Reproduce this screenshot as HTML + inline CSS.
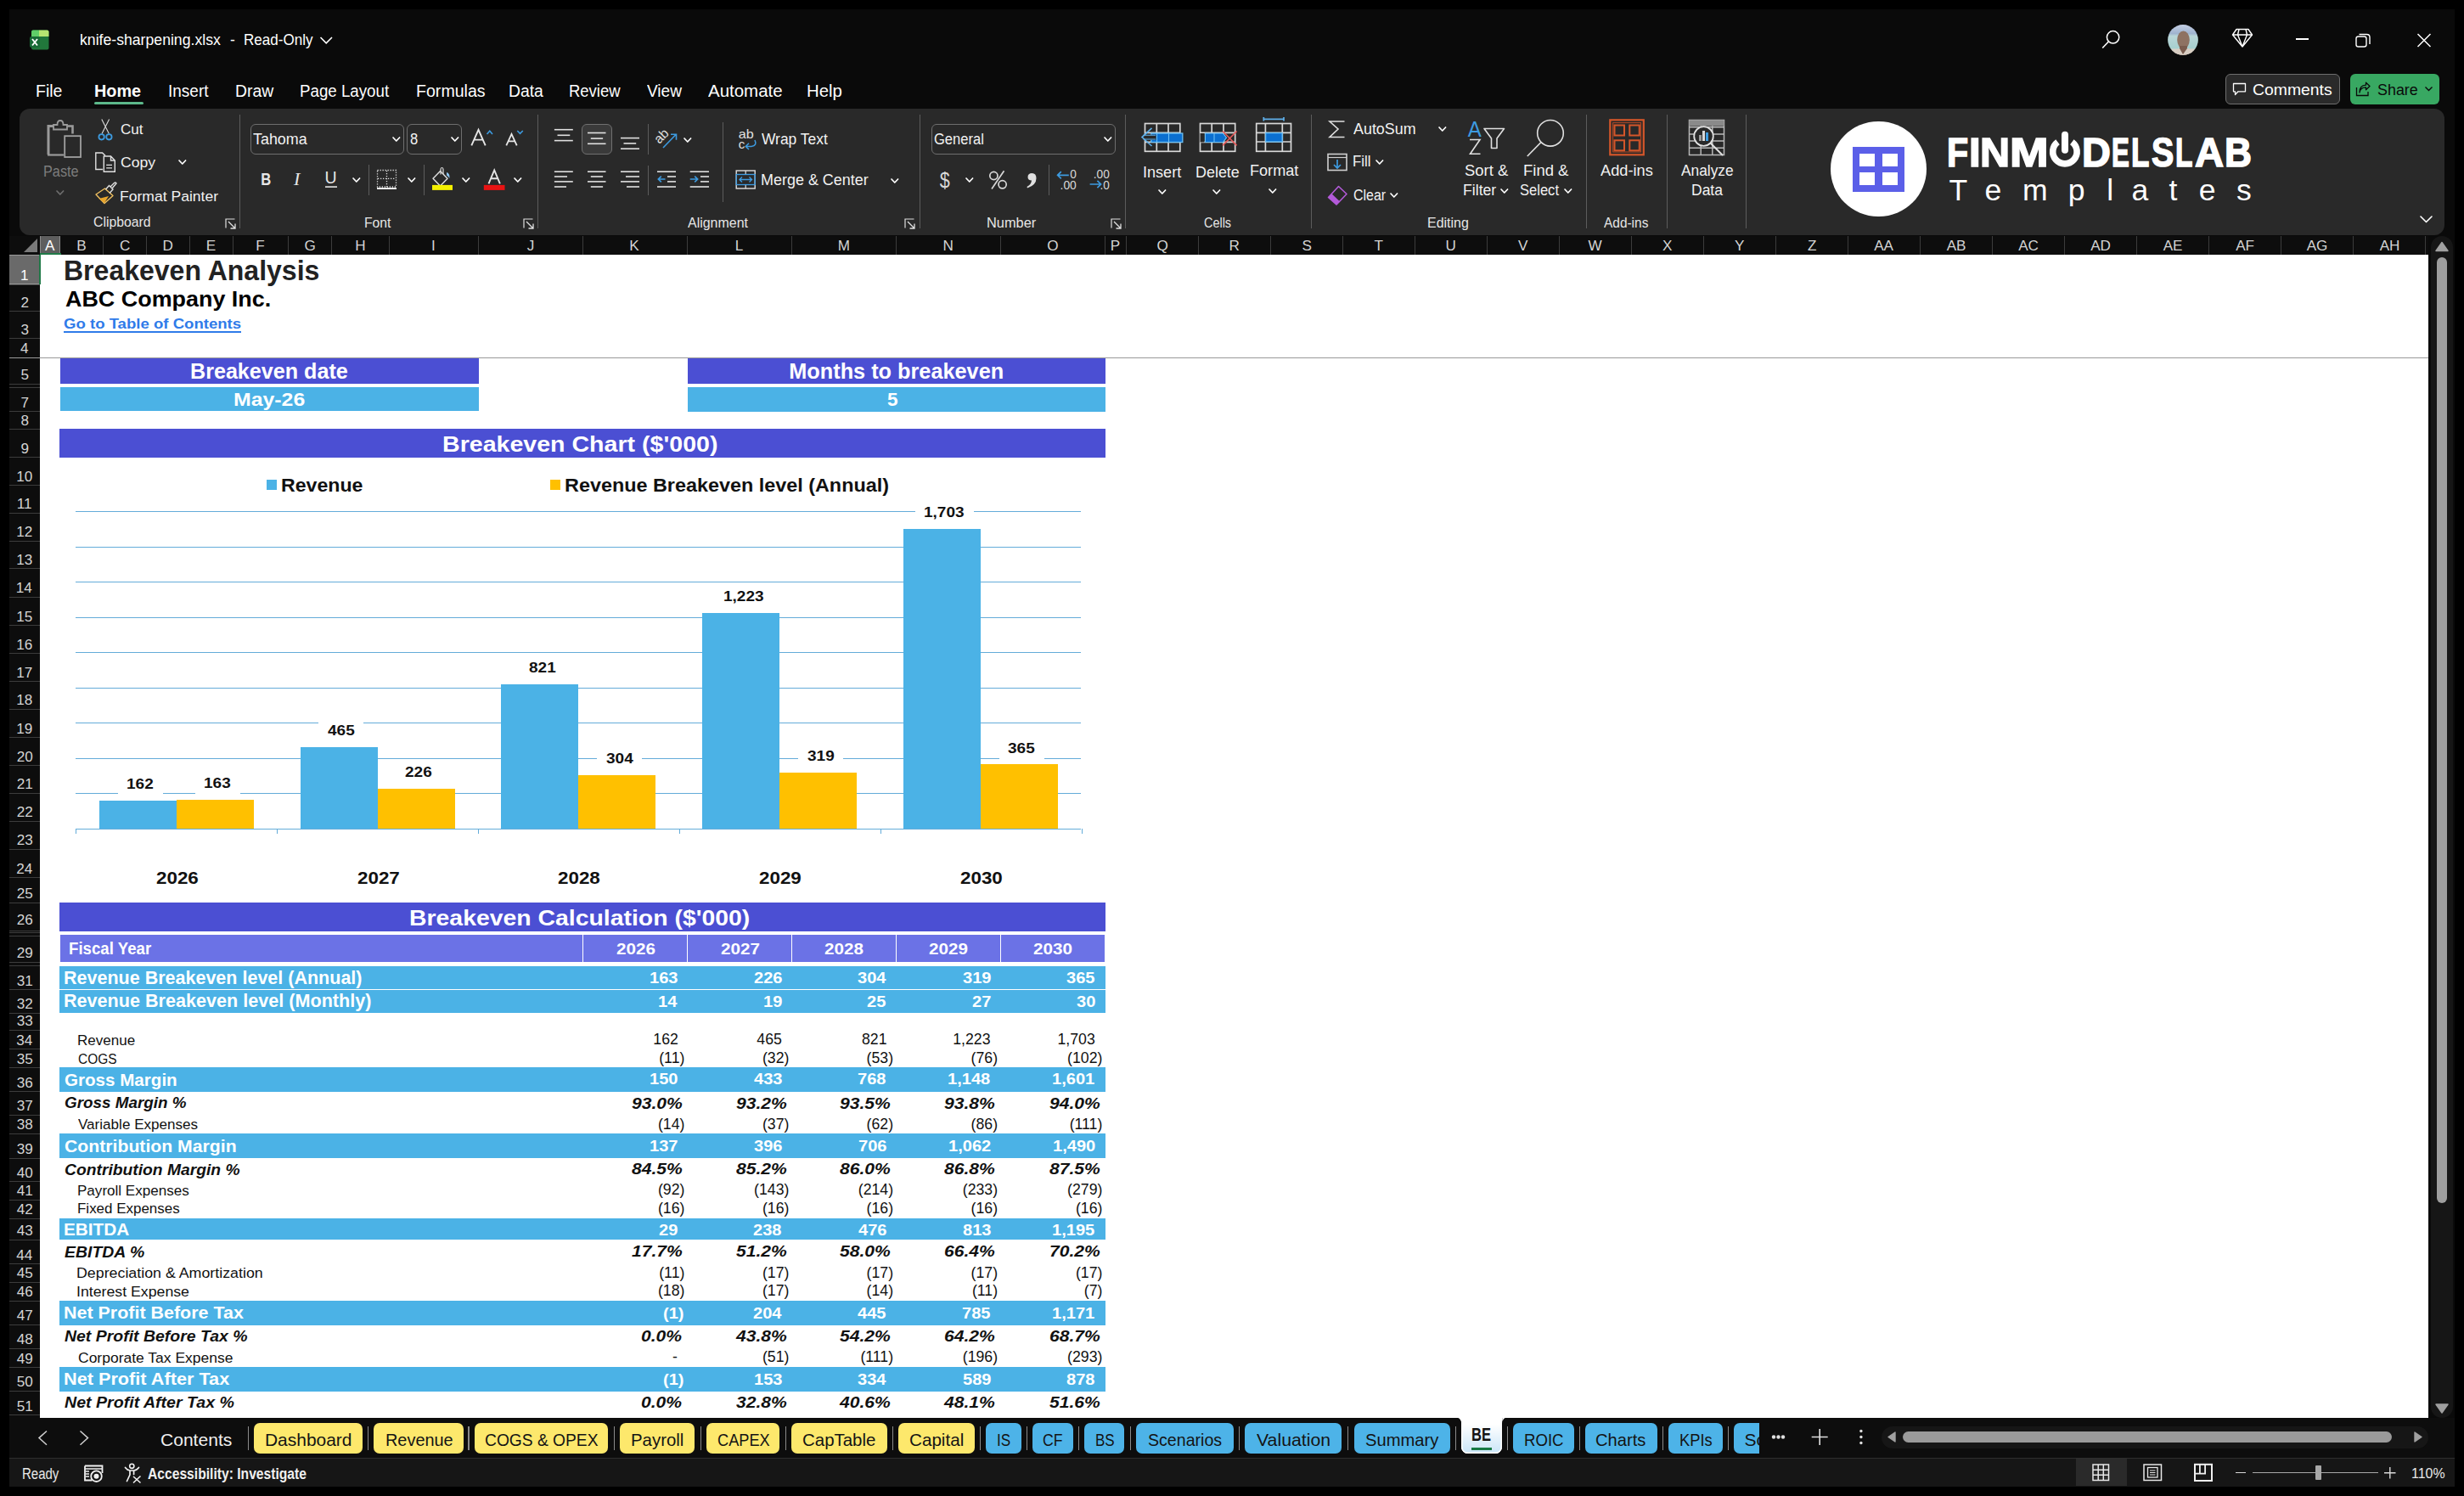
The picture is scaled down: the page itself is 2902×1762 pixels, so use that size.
<!DOCTYPE html>
<html><head><meta charset="utf-8"><style>
html,body{margin:0;padding:0;}
body{width:2902px;height:1762px;background:#000;position:relative;overflow:hidden;font-family:'Liberation Sans', sans-serif;}
.t{position:absolute;white-space:nowrap;line-height:1;transform-origin:0 0;}
svg{position:absolute;overflow:visible;}
</style></head><body>
<div style="position:absolute;left:11.00px;top:11.00px;width:2880.00px;height:1740.00px;background:#0a0a0a;"></div><div style="position:absolute;left:23.00px;top:128.00px;width:2856.00px;height:149.00px;background:#292929;border-radius:12px;"></div><div style="position:absolute;left:11.00px;top:278.00px;width:2849.00px;height:22.00px;background:#0d0d0d;"></div><div style="position:absolute;left:11.00px;top:300.00px;width:36.00px;height:1370.00px;background:#0d0d0d;"></div><div style="position:absolute;left:47.00px;top:278.00px;width:24.00px;height:22.00px;background:#5e5e5e;"></div><div style="position:absolute;left:47.00px;top:298.20px;width:25.00px;height:2.10px;background:#217a48;"></div><div style="position:absolute;left:47.00px;top:278.00px;width:1.00px;height:20.00px;background:#8a8a8a;"></div><div style="position:absolute;left:70.00px;top:278.00px;width:1.00px;height:20.00px;background:#8a8a8a;"></div><div style="position:absolute;left:121.10px;top:278.00px;width:1.00px;height:22.00px;background:#3c3c3c;"></div><div style="position:absolute;left:171.90px;top:278.00px;width:1.00px;height:22.00px;background:#3c3c3c;"></div><div style="position:absolute;left:223.10px;top:278.00px;width:1.00px;height:22.00px;background:#3c3c3c;"></div><div style="position:absolute;left:273.60px;top:278.00px;width:1.00px;height:22.00px;background:#3c3c3c;"></div><div style="position:absolute;left:339.00px;top:278.00px;width:1.00px;height:22.00px;background:#3c3c3c;"></div><div style="position:absolute;left:390.10px;top:278.00px;width:1.00px;height:22.00px;background:#3c3c3c;"></div><div style="position:absolute;left:457.50px;top:278.00px;width:1.00px;height:22.00px;background:#3c3c3c;"></div><div style="position:absolute;left:562.50px;top:278.00px;width:1.00px;height:22.00px;background:#3c3c3c;"></div><div style="position:absolute;left:685.80px;top:278.00px;width:1.00px;height:22.00px;background:#3c3c3c;"></div><div style="position:absolute;left:808.80px;top:278.00px;width:1.00px;height:22.00px;background:#3c3c3c;"></div><div style="position:absolute;left:931.80px;top:278.00px;width:1.00px;height:22.00px;background:#3c3c3c;"></div><div style="position:absolute;left:1054.50px;top:278.00px;width:1.00px;height:22.00px;background:#3c3c3c;"></div><div style="position:absolute;left:1177.50px;top:278.00px;width:1.00px;height:22.00px;background:#3c3c3c;"></div><div style="position:absolute;left:1300.80px;top:278.00px;width:1.00px;height:22.00px;background:#3c3c3c;"></div><div style="position:absolute;left:1325.90px;top:278.00px;width:1.00px;height:22.00px;background:#3c3c3c;"></div><div style="position:absolute;left:1410.90px;top:278.00px;width:1.00px;height:22.00px;background:#3c3c3c;"></div><div style="position:absolute;left:1495.90px;top:278.00px;width:1.00px;height:22.00px;background:#3c3c3c;"></div><div style="position:absolute;left:1580.90px;top:278.00px;width:1.00px;height:22.00px;background:#3c3c3c;"></div><div style="position:absolute;left:1665.90px;top:278.00px;width:1.00px;height:22.00px;background:#3c3c3c;"></div><div style="position:absolute;left:1750.90px;top:278.00px;width:1.00px;height:22.00px;background:#3c3c3c;"></div><div style="position:absolute;left:1835.90px;top:278.00px;width:1.00px;height:22.00px;background:#3c3c3c;"></div><div style="position:absolute;left:1920.90px;top:278.00px;width:1.00px;height:22.00px;background:#3c3c3c;"></div><div style="position:absolute;left:2005.90px;top:278.00px;width:1.00px;height:22.00px;background:#3c3c3c;"></div><div style="position:absolute;left:2090.90px;top:278.00px;width:1.00px;height:22.00px;background:#3c3c3c;"></div><div style="position:absolute;left:2175.90px;top:278.00px;width:1.00px;height:22.00px;background:#3c3c3c;"></div><div style="position:absolute;left:2260.90px;top:278.00px;width:1.00px;height:22.00px;background:#3c3c3c;"></div><div style="position:absolute;left:2345.90px;top:278.00px;width:1.00px;height:22.00px;background:#3c3c3c;"></div><div style="position:absolute;left:2430.90px;top:278.00px;width:1.00px;height:22.00px;background:#3c3c3c;"></div><div style="position:absolute;left:2515.90px;top:278.00px;width:1.00px;height:22.00px;background:#3c3c3c;"></div><div style="position:absolute;left:2600.90px;top:278.00px;width:1.00px;height:22.00px;background:#3c3c3c;"></div><div style="position:absolute;left:2685.90px;top:278.00px;width:1.00px;height:22.00px;background:#3c3c3c;"></div><div style="position:absolute;left:2770.90px;top:278.00px;width:1.00px;height:22.00px;background:#3c3c3c;"></div><div style="position:absolute;left:2855.90px;top:278.00px;width:1.00px;height:22.00px;background:#3c3c3c;"></div><svg style="left:11px;top:278px" width="36" height="22"><polygon points="33,3 33,19 17,19" fill="#7a7a7a"/></svg><div style="position:absolute;left:47.00px;top:300.00px;width:2813.00px;height:1370.00px;background:#ffffff;"></div><div style="position:absolute;left:11.00px;top:300.30px;width:36.00px;height:34.80px;background:#6a6a6a;"></div><div style="position:absolute;left:46.00px;top:300.00px;width:2.00px;height:35.10px;background:#217a48;"></div><div style="position:absolute;left:11.00px;top:300.30px;width:35.00px;height:1.00px;background:#9a9a9a;"></div><div style="position:absolute;left:11.00px;top:334.10px;width:35.00px;height:1.00px;background:#9a9a9a;"></div><div style="position:absolute;left:11.00px;top:334.60px;width:36.00px;height:1.10px;background:#3c3c3c;"></div><div style="position:absolute;left:11.00px;top:366.20px;width:36.00px;height:1.10px;background:#3c3c3c;"></div><div style="position:absolute;left:11.00px;top:398.20px;width:36.00px;height:1.10px;background:#3c3c3c;"></div><div style="position:absolute;left:11.00px;top:420.90px;width:36.00px;height:1.10px;background:#3c3c3c;"></div><div style="position:absolute;left:11.00px;top:451.90px;width:36.00px;height:1.10px;background:#3c3c3c;"></div><div style="position:absolute;left:11.00px;top:455.60px;width:36.00px;height:1.10px;background:#3c3c3c;"></div><div style="position:absolute;left:11.00px;top:484.00px;width:36.00px;height:1.10px;background:#3c3c3c;"></div><div style="position:absolute;left:11.00px;top:505.10px;width:36.00px;height:1.10px;background:#3c3c3c;"></div><div style="position:absolute;left:11.00px;top:538.00px;width:36.00px;height:1.10px;background:#3c3c3c;"></div><div style="position:absolute;left:11.00px;top:571.20px;width:36.00px;height:1.10px;background:#3c3c3c;"></div><div style="position:absolute;left:11.00px;top:603.90px;width:36.00px;height:1.10px;background:#3c3c3c;"></div><div style="position:absolute;left:11.00px;top:636.90px;width:36.00px;height:1.10px;background:#3c3c3c;"></div><div style="position:absolute;left:11.00px;top:669.40px;width:36.00px;height:1.10px;background:#3c3c3c;"></div><div style="position:absolute;left:11.00px;top:702.80px;width:36.00px;height:1.10px;background:#3c3c3c;"></div><div style="position:absolute;left:11.00px;top:736.00px;width:36.00px;height:1.10px;background:#3c3c3c;"></div><div style="position:absolute;left:11.00px;top:769.00px;width:36.00px;height:1.10px;background:#3c3c3c;"></div><div style="position:absolute;left:11.00px;top:802.00px;width:36.00px;height:1.10px;background:#3c3c3c;"></div><div style="position:absolute;left:11.00px;top:834.50px;width:36.00px;height:1.10px;background:#3c3c3c;"></div><div style="position:absolute;left:11.00px;top:868.10px;width:36.00px;height:1.10px;background:#3c3c3c;"></div><div style="position:absolute;left:11.00px;top:901.10px;width:36.00px;height:1.10px;background:#3c3c3c;"></div><div style="position:absolute;left:11.00px;top:933.80px;width:36.00px;height:1.10px;background:#3c3c3c;"></div><div style="position:absolute;left:11.00px;top:966.80px;width:36.00px;height:1.10px;background:#3c3c3c;"></div><div style="position:absolute;left:11.00px;top:999.70px;width:36.00px;height:1.10px;background:#3c3c3c;"></div><div style="position:absolute;left:11.00px;top:1033.40px;width:36.00px;height:1.10px;background:#3c3c3c;"></div><div style="position:absolute;left:11.00px;top:1062.90px;width:36.00px;height:1.10px;background:#3c3c3c;"></div><div style="position:absolute;left:11.00px;top:1096.10px;width:36.00px;height:1.10px;background:#3c3c3c;"></div><div style="position:absolute;left:11.00px;top:1098.00px;width:36.00px;height:1.10px;background:#3c3c3c;"></div><div style="position:absolute;left:11.00px;top:1101.90px;width:36.00px;height:1.10px;background:#3c3c3c;"></div><div style="position:absolute;left:11.00px;top:1132.90px;width:36.00px;height:1.10px;background:#3c3c3c;"></div><div style="position:absolute;left:11.00px;top:1136.80px;width:36.00px;height:1.10px;background:#3c3c3c;"></div><div style="position:absolute;left:11.00px;top:1165.00px;width:36.00px;height:1.10px;background:#3c3c3c;"></div><div style="position:absolute;left:11.00px;top:1192.90px;width:36.00px;height:1.10px;background:#3c3c3c;"></div><div style="position:absolute;left:11.00px;top:1212.60px;width:36.00px;height:1.10px;background:#3c3c3c;"></div><div style="position:absolute;left:11.00px;top:1235.40px;width:36.00px;height:1.10px;background:#3c3c3c;"></div><div style="position:absolute;left:11.00px;top:1257.00px;width:36.00px;height:1.10px;background:#3c3c3c;"></div><div style="position:absolute;left:11.00px;top:1285.00px;width:36.00px;height:1.10px;background:#3c3c3c;"></div><div style="position:absolute;left:11.00px;top:1312.70px;width:36.00px;height:1.10px;background:#3c3c3c;"></div><div style="position:absolute;left:11.00px;top:1334.70px;width:36.00px;height:1.10px;background:#3c3c3c;"></div><div style="position:absolute;left:11.00px;top:1363.50px;width:36.00px;height:1.10px;background:#3c3c3c;"></div><div style="position:absolute;left:11.00px;top:1391.00px;width:36.00px;height:1.10px;background:#3c3c3c;"></div><div style="position:absolute;left:11.00px;top:1412.90px;width:36.00px;height:1.10px;background:#3c3c3c;"></div><div style="position:absolute;left:11.00px;top:1434.80px;width:36.00px;height:1.10px;background:#3c3c3c;"></div><div style="position:absolute;left:11.00px;top:1459.80px;width:36.00px;height:1.10px;background:#3c3c3c;"></div><div style="position:absolute;left:11.00px;top:1488.00px;width:36.00px;height:1.10px;background:#3c3c3c;"></div><div style="position:absolute;left:11.00px;top:1509.60px;width:36.00px;height:1.10px;background:#3c3c3c;"></div><div style="position:absolute;left:11.00px;top:1531.70px;width:36.00px;height:1.10px;background:#3c3c3c;"></div><div style="position:absolute;left:11.00px;top:1559.70px;width:36.00px;height:1.10px;background:#3c3c3c;"></div><div style="position:absolute;left:11.00px;top:1587.90px;width:36.00px;height:1.10px;background:#3c3c3c;"></div><div style="position:absolute;left:11.00px;top:1610.00px;width:36.00px;height:1.10px;background:#3c3c3c;"></div><div style="position:absolute;left:11.00px;top:1637.90px;width:36.00px;height:1.10px;background:#3c3c3c;"></div><div style="position:absolute;left:11.00px;top:1666.10px;width:36.00px;height:1.10px;background:#3c3c3c;"></div><div style="position:absolute;left:11.00px;top:420.90px;width:2849.00px;height:1.00px;background:#9a9a9a;"></div><div style="position:absolute;left:74.50px;top:389.60px;width:209.00px;height:2.00px;background:#2f7be9;"></div><div style="position:absolute;left:71.20px;top:421.90px;width:492.60px;height:29.70px;background:#4b4fd3;"></div><div style="position:absolute;left:71.20px;top:456.30px;width:492.60px;height:28.10px;background:#4bb2e6;"></div><div style="position:absolute;left:809.60px;top:421.90px;width:492.30px;height:29.90px;background:#4b4fd3;"></div><div style="position:absolute;left:809.60px;top:456.10px;width:492.30px;height:28.50px;background:#4bb2e6;"></div><div style="position:absolute;left:70.00px;top:505.20px;width:1231.90px;height:33.40px;background:#4b4fd3;"></div><div style="position:absolute;left:70.00px;top:1063.10px;width:1231.90px;height:33.70px;background:#4b4fd3;"></div><div style="position:absolute;left:71.10px;top:1101.20px;width:1229.90px;height:31.60px;background:#6b72e6;"></div><div style="position:absolute;left:685.60px;top:1101.20px;width:1.40px;height:31.60px;background:#ffffff;"></div><div style="position:absolute;left:808.50px;top:1101.20px;width:1.40px;height:31.60px;background:#ffffff;"></div><div style="position:absolute;left:931.70px;top:1101.20px;width:1.40px;height:31.60px;background:#ffffff;"></div><div style="position:absolute;left:1054.70px;top:1101.20px;width:1.40px;height:31.60px;background:#ffffff;"></div><div style="position:absolute;left:1177.70px;top:1101.20px;width:1.40px;height:31.60px;background:#ffffff;"></div><div style="position:absolute;left:70.20px;top:1138.20px;width:1231.70px;height:26.50px;background:#4bb2e6;"></div><div style="position:absolute;left:70.20px;top:1166.20px;width:1231.70px;height:27.30px;background:#4bb2e6;"></div><div style="position:absolute;left:70.20px;top:1257.10px;width:1231.70px;height:28.60px;background:#4bb2e6;"></div><div style="position:absolute;left:70.20px;top:1335.20px;width:1231.70px;height:28.80px;background:#4bb2e6;"></div><div style="position:absolute;left:70.20px;top:1435.00px;width:1231.70px;height:25.40px;background:#4bb2e6;"></div><div style="position:absolute;left:70.20px;top:1532.10px;width:1231.70px;height:28.60px;background:#4bb2e6;"></div><div style="position:absolute;left:70.20px;top:1610.00px;width:1231.70px;height:28.60px;background:#4bb2e6;"></div><div style="position:absolute;left:89.40px;top:602.00px;width:1184.10px;height:1.00px;background:#64acd9;"></div><div style="position:absolute;left:89.40px;top:644.00px;width:1184.10px;height:1.00px;background:#64acd9;"></div><div style="position:absolute;left:89.40px;top:685.00px;width:1184.10px;height:1.00px;background:#64acd9;"></div><div style="position:absolute;left:89.40px;top:727.00px;width:1184.10px;height:1.00px;background:#64acd9;"></div><div style="position:absolute;left:89.40px;top:768.00px;width:1184.10px;height:1.00px;background:#64acd9;"></div><div style="position:absolute;left:89.40px;top:810.00px;width:1184.10px;height:1.00px;background:#64acd9;"></div><div style="position:absolute;left:89.40px;top:851.00px;width:1184.10px;height:1.00px;background:#64acd9;"></div><div style="position:absolute;left:89.40px;top:893.00px;width:1184.10px;height:1.00px;background:#64acd9;"></div><div style="position:absolute;left:89.40px;top:934.00px;width:1184.10px;height:1.00px;background:#64acd9;"></div><div style="position:absolute;left:89.40px;top:976.00px;width:1184.10px;height:1.00px;background:#64acd9;"></div><div style="position:absolute;left:89.00px;top:976.00px;width:1.00px;height:6.00px;background:#64acd9;"></div><div style="position:absolute;left:326.00px;top:976.00px;width:1.00px;height:6.00px;background:#64acd9;"></div><div style="position:absolute;left:563.00px;top:976.00px;width:1.00px;height:6.00px;background:#64acd9;"></div><div style="position:absolute;left:800.00px;top:976.00px;width:1.00px;height:6.00px;background:#64acd9;"></div><div style="position:absolute;left:1037.00px;top:976.00px;width:1.00px;height:6.00px;background:#64acd9;"></div><div style="position:absolute;left:1274.00px;top:976.00px;width:1.00px;height:6.00px;background:#64acd9;"></div><div style="position:absolute;left:116.81px;top:942.57px;width:91.00px;height:33.63px;background:#4bb2e6;"></div><div style="position:absolute;left:207.81px;top:942.36px;width:91.00px;height:33.84px;background:#ffc000;"></div><div style="position:absolute;left:138.61px;top:912.37px;width:53.00px;height:24.00px;background:#ffffff;"></div><div style="position:absolute;left:229.61px;top:912.16px;width:53.00px;height:24.00px;background:#ffffff;"></div><div style="position:absolute;left:353.63px;top:879.66px;width:91.00px;height:96.54px;background:#4bb2e6;"></div><div style="position:absolute;left:444.63px;top:929.28px;width:91.00px;height:46.92px;background:#ffc000;"></div><div style="position:absolute;left:375.43px;top:849.46px;width:53.00px;height:24.00px;background:#ffffff;"></div><div style="position:absolute;left:466.43px;top:899.08px;width:53.00px;height:24.00px;background:#ffffff;"></div><div style="position:absolute;left:590.45px;top:805.75px;width:91.00px;height:170.45px;background:#4bb2e6;"></div><div style="position:absolute;left:681.45px;top:913.09px;width:91.00px;height:63.11px;background:#ffc000;"></div><div style="position:absolute;left:612.25px;top:775.55px;width:53.00px;height:24.00px;background:#ffffff;"></div><div style="position:absolute;left:703.25px;top:882.89px;width:53.00px;height:24.00px;background:#ffffff;"></div><div style="position:absolute;left:827.27px;top:722.29px;width:91.00px;height:253.91px;background:#4bb2e6;"></div><div style="position:absolute;left:918.27px;top:909.97px;width:91.00px;height:66.23px;background:#ffc000;"></div><div style="position:absolute;left:841.22px;top:692.09px;width:68.70px;height:24.00px;background:#ffffff;"></div><div style="position:absolute;left:940.07px;top:879.77px;width:53.00px;height:24.00px;background:#ffffff;"></div><div style="position:absolute;left:1064.09px;top:622.64px;width:91.00px;height:353.56px;background:#4bb2e6;"></div><div style="position:absolute;left:1155.09px;top:900.42px;width:91.00px;height:75.78px;background:#ffc000;"></div><div style="position:absolute;left:1078.04px;top:592.44px;width:68.70px;height:24.00px;background:#ffffff;"></div><div style="position:absolute;left:1176.89px;top:870.22px;width:53.00px;height:24.00px;background:#ffffff;"></div><div style="position:absolute;left:314.00px;top:565.00px;width:12.20px;height:12.20px;background:#4bb2e6;"></div><div style="position:absolute;left:647.60px;top:565.00px;width:12.60px;height:12.20px;background:#ffc000;"></div><svg style="left:376px;top:42px" width="17" height="11"><polyline points="1.5,2 8.2,8.8 15,2" fill="none" stroke="#fff" stroke-width="1.6"/></svg><div style="position:absolute;left:111.20px;top:120.00px;width:57.80px;height:2.80px;background:#5cb88a;border-radius:2px;"></div><div style="position:absolute;left:2620.80px;top:87.00px;width:135.00px;height:35.80px;background:#2a2a2a;border:1.2px solid #6e6e6e;border-radius:6px;box-sizing:border-box;"></div><svg style="left:2628px;top:96px" width="20" height="20"><path d="M2.5,2.5 H16.5 V11.8 H8 L4.5,15.5 V11.8 H2.5 Z" fill="none" stroke="#fff" stroke-width="1.3" stroke-linejoin="round"/></svg><div style="position:absolute;left:2768.40px;top:87.00px;width:104.30px;height:35.80px;background:#38a862;border-radius:6px;"></div><svg style="left:2773px;top:96px" width="20" height="20"><path d="M2.5,7 V16.5 H16 V12" fill="none" stroke="#0a0a0a" stroke-width="1.3"/><path d="M6,13 C6.5,8.5 9.5,6.8 13.5,6.8 V9.8 L18,5.5 L13.5,1.3 V4.2 C9,4.3 6,7.5 6,13 Z" fill="none" stroke="#0a0a0a" stroke-width="1.3" stroke-linejoin="round"/></svg><svg style="left:2855px;top:100px" width="12" height="10"><polyline points="1.5,2.5 5.5,6.5 9.5,2.5" fill="none" stroke="#0a0a0a" stroke-width="1.4"/></svg><svg style="left:2470px;top:30px" width="30" height="30"><circle cx="18.6" cy="13.8" r="7.2" fill="none" stroke="#fff" stroke-width="1.5"/><line x1="13.4" y1="19" x2="6.2" y2="26.5" stroke="#fff" stroke-width="1.6"/></svg><svg style="left:2552px;top:28px" width="38" height="38"><defs><clipPath id="av"><circle cx="19" cy="19" r="17.9"/></clipPath><linearGradient id="avg" x1="0" y1="0" x2="0" y2="1"><stop offset="0" stop-color="#c9d2e6"/><stop offset="0.3" stop-color="#9fb3cf"/><stop offset="0.38" stop-color="#b9d6d8"/><stop offset="0.75" stop-color="#a7d0cf"/><stop offset="0.8" stop-color="#d8d2c8"/><stop offset="1" stop-color="#cfc3b8"/></linearGradient></defs><g clip-path="url(#av)"><rect width="38" height="38" fill="url(#avg)"/><ellipse cx="19.5" cy="19" rx="7.3" ry="10.5" fill="#8e7262"/><rect x="15" y="26" width="9" height="12" fill="#7a5c4e"/><path d="M8,38 Q10,30 15,29 L19,36 L24,29 Q30,30 32,38 Z" fill="#d8cdc2"/></g></svg><svg style="left:2628px;top:32px" width="26" height="26"><path d="M6,2.5 H20 L24.5,9 L13,23 L1.5,9 Z M1.5,9 H24.5 M9,2.5 L7.5,9 L13,23 L18.5,9 L17,2.5" fill="none" stroke="#fff" stroke-width="1.4" stroke-linejoin="round"/></svg><div style="position:absolute;left:2703.60px;top:45.30px;width:15.60px;height:1.30px;background:#ffffff;"></div><svg style="left:2772px;top:37px" width="22" height="22"><rect x="3" y="6" width="12" height="12" rx="2.5" fill="none" stroke="#fff" stroke-width="1.4"/><path d="M6.5,3.5 H15.5 Q19,3.5 19,7 V15" fill="none" stroke="#fff" stroke-width="1.4"/></svg><svg style="left:2844px;top:37px" width="22" height="22"><path d="M3.5,3 L18.5,18 M18.5,3 L3.5,18" stroke="#fff" stroke-width="1.5"/></svg><svg style="left:34px;top:34px" width="26" height="26"><rect x="3" y="1.5" width="20.5" height="23" rx="2" fill="#21773b"/><path d="M3,3.5 Q3,1.5 5,1.5 H12 V9 H3 Z" fill="#5fce68"/><path d="M12,1.5 H21.5 Q23.5,1.5 23.5,3.5 V9 H12 Z" fill="#b7e672"/><rect x="1" y="9" width="12" height="13" rx="2" fill="#186b36"/><path d="M4,12 L10,19.5 M10,12 L4,19.5" stroke="#fff" stroke-width="1.9"/></svg><div style="position:absolute;left:282.00px;top:135.00px;width:1.00px;height:133.50px;background:#5c5c5c;"></div><div style="position:absolute;left:633.00px;top:135.00px;width:1.00px;height:133.50px;background:#5c5c5c;"></div><div style="position:absolute;left:1083.10px;top:135.00px;width:1.00px;height:133.50px;background:#5c5c5c;"></div><div style="position:absolute;left:1325.00px;top:135.00px;width:1.00px;height:133.50px;background:#5c5c5c;"></div><div style="position:absolute;left:1544.10px;top:135.00px;width:1.00px;height:133.50px;background:#5c5c5c;"></div><div style="position:absolute;left:1867.80px;top:135.00px;width:1.00px;height:133.50px;background:#5c5c5c;"></div><div style="position:absolute;left:1962.90px;top:135.00px;width:1.00px;height:133.50px;background:#5c5c5c;"></div><div style="position:absolute;left:2056.00px;top:135.00px;width:1.00px;height:133.50px;background:#5c5c5c;"></div><div style="position:absolute;left:433.90px;top:193.50px;width:1.00px;height:36.70px;background:#5c5c5c;"></div><div style="position:absolute;left:499.00px;top:193.50px;width:1.00px;height:36.70px;background:#5c5c5c;"></div><div style="position:absolute;left:763.00px;top:146.00px;width:1.00px;height:36.20px;background:#5c5c5c;"></div><div style="position:absolute;left:763.00px;top:194.60px;width:1.00px;height:35.40px;background:#5c5c5c;"></div><div style="position:absolute;left:851.10px;top:144.00px;width:1.00px;height:93.50px;background:#5c5c5c;"></div><div style="position:absolute;left:1235.00px;top:194.00px;width:1.00px;height:36.00px;background:#5c5c5c;"></div><div style="position:absolute;left:295.30px;top:146.40px;width:180.30px;height:35.30px;background:transparent;border:1.3px solid #6e6e6e;border-radius:6px;box-sizing:border-box;"></div><div style="position:absolute;left:479.30px;top:146.40px;width:64.30px;height:35.30px;background:transparent;border:1.3px solid #6e6e6e;border-radius:6px;box-sizing:border-box;"></div><div style="position:absolute;left:1096.60px;top:146.40px;width:217.20px;height:35.30px;background:transparent;border:1.3px solid #6e6e6e;border-radius:6px;box-sizing:border-box;"></div><div style="position:absolute;left:685.30px;top:146.40px;width:35.30px;height:35.40px;background:#3a3a3a;border:1.3px solid #707070;border-radius:6px;box-sizing:border-box;"></div><svg style="left:209.20px;top:187.00px" width="11.6" height="8.0"><polyline points="2,2 5.80,6.00 9.60,2" fill="none" stroke="#ffffff" stroke-width="1.7" stroke-linecap="round" stroke-linejoin="round"/></svg><svg style="left:461.40px;top:160.40px" width="11.6" height="8.0"><polyline points="2,2 5.80,6.00 9.60,2" fill="none" stroke="#ffffff" stroke-width="1.7" stroke-linecap="round" stroke-linejoin="round"/></svg><svg style="left:529.60px;top:160.40px" width="11.6" height="8.0"><polyline points="2,2 5.80,6.00 9.60,2" fill="none" stroke="#ffffff" stroke-width="1.7" stroke-linecap="round" stroke-linejoin="round"/></svg><svg style="left:413.60px;top:207.90px" width="11.6" height="8.0"><polyline points="2,2 5.80,6.00 9.60,2" fill="none" stroke="#ffffff" stroke-width="1.7" stroke-linecap="round" stroke-linejoin="round"/></svg><svg style="left:478.60px;top:207.90px" width="11.6" height="8.0"><polyline points="2,2 5.80,6.00 9.60,2" fill="none" stroke="#ffffff" stroke-width="1.7" stroke-linecap="round" stroke-linejoin="round"/></svg><svg style="left:543.40px;top:207.90px" width="11.6" height="8.0"><polyline points="2,2 5.80,6.00 9.60,2" fill="none" stroke="#ffffff" stroke-width="1.7" stroke-linecap="round" stroke-linejoin="round"/></svg><svg style="left:604.40px;top:207.90px" width="11.6" height="8.0"><polyline points="2,2 5.80,6.00 9.60,2" fill="none" stroke="#ffffff" stroke-width="1.7" stroke-linecap="round" stroke-linejoin="round"/></svg><svg style="left:804.40px;top:160.50px" width="11.6" height="8.0"><polyline points="2,2 5.80,6.00 9.60,2" fill="none" stroke="#ffffff" stroke-width="1.7" stroke-linecap="round" stroke-linejoin="round"/></svg><svg style="left:1048.00px;top:208.50px" width="11.6" height="8.0"><polyline points="2,2 5.80,6.00 9.60,2" fill="none" stroke="#ffffff" stroke-width="1.7" stroke-linecap="round" stroke-linejoin="round"/></svg><svg style="left:1299.20px;top:160.40px" width="11.6" height="8.0"><polyline points="2,2 5.80,6.00 9.60,2" fill="none" stroke="#ffffff" stroke-width="1.7" stroke-linecap="round" stroke-linejoin="round"/></svg><svg style="left:1136.20px;top:207.50px" width="11.6" height="8.0"><polyline points="2,2 5.80,6.00 9.60,2" fill="none" stroke="#ffffff" stroke-width="1.7" stroke-linecap="round" stroke-linejoin="round"/></svg><svg style="left:1362.50px;top:222.30px" width="11.6" height="8.0"><polyline points="2,2 5.80,6.00 9.60,2" fill="none" stroke="#ffffff" stroke-width="1.7" stroke-linecap="round" stroke-linejoin="round"/></svg><svg style="left:1427.20px;top:222.30px" width="11.6" height="8.0"><polyline points="2,2 5.80,6.00 9.60,2" fill="none" stroke="#ffffff" stroke-width="1.7" stroke-linecap="round" stroke-linejoin="round"/></svg><svg style="left:1493.10px;top:220.70px" width="11.6" height="8.0"><polyline points="2,2 5.80,6.00 9.60,2" fill="none" stroke="#ffffff" stroke-width="1.7" stroke-linecap="round" stroke-linejoin="round"/></svg><svg style="left:1693.20px;top:148.40px" width="11.6" height="8.0"><polyline points="2,2 5.80,6.00 9.60,2" fill="none" stroke="#ffffff" stroke-width="1.7" stroke-linecap="round" stroke-linejoin="round"/></svg><svg style="left:1618.60px;top:186.50px" width="11.6" height="8.0"><polyline points="2,2 5.80,6.00 9.60,2" fill="none" stroke="#ffffff" stroke-width="1.7" stroke-linecap="round" stroke-linejoin="round"/></svg><svg style="left:1636.20px;top:225.50px" width="11.6" height="8.0"><polyline points="2,2 5.80,6.00 9.60,2" fill="none" stroke="#ffffff" stroke-width="1.7" stroke-linecap="round" stroke-linejoin="round"/></svg><svg style="left:1766.20px;top:220.50px" width="11.6" height="8.0"><polyline points="2,2 5.80,6.00 9.60,2" fill="none" stroke="#ffffff" stroke-width="1.7" stroke-linecap="round" stroke-linejoin="round"/></svg><svg style="left:1841.00px;top:220.50px" width="11.6" height="8.0"><polyline points="2,2 5.80,6.00 9.60,2" fill="none" stroke="#ffffff" stroke-width="1.7" stroke-linecap="round" stroke-linejoin="round"/></svg><svg style="left:65.20px;top:222.50px" width="11.6" height="8.0"><polyline points="2,2 5.80,6.00 9.60,2" fill="none" stroke="#6e6e6e" stroke-width="1.7" stroke-linecap="round" stroke-linejoin="round"/></svg><svg style="left:2848.50px;top:252.55px" width="17.0" height="10.5"><polyline points="2,2 8.50,8.50 15.00,2" fill="none" stroke="#ffffff" stroke-width="1.6" stroke-linecap="round" stroke-linejoin="round"/></svg><svg style="left:264.8px;top:257.2px" width="14" height="13"><path d="M1,11.5 V1 H11.5" fill="none" stroke="#e0e0e0" stroke-width="1.2"/><path d="M4,4 L12,12 M12,6.5 V12 H6.5" fill="none" stroke="#e0e0e0" stroke-width="1.3"/></svg><svg style="left:615.5px;top:257.2px" width="14" height="13"><path d="M1,11.5 V1 H11.5" fill="none" stroke="#e0e0e0" stroke-width="1.2"/><path d="M4,4 L12,12 M12,6.5 V12 H6.5" fill="none" stroke="#e0e0e0" stroke-width="1.3"/></svg><svg style="left:1065.3px;top:257.2px" width="14" height="13"><path d="M1,11.5 V1 H11.5" fill="none" stroke="#e0e0e0" stroke-width="1.2"/><path d="M4,4 L12,12 M12,6.5 V12 H6.5" fill="none" stroke="#e0e0e0" stroke-width="1.3"/></svg><svg style="left:1307.6px;top:257.2px" width="14" height="13"><path d="M1,11.5 V1 H11.5" fill="none" stroke="#e0e0e0" stroke-width="1.2"/><path d="M4,4 L12,12 M12,6.5 V12 H6.5" fill="none" stroke="#e0e0e0" stroke-width="1.3"/></svg><svg style="left:0;top:0" width="2902" height="300"><path d="M57,182 V148.5 H64" fill="none" stroke="#9a9a9a" stroke-width="3"/><path d="M56,182.5 H75" stroke="#9a9a9a" stroke-width="2.2"/><path d="M79,148.5 H85.5 V157.5" fill="none" stroke="#9a9a9a" stroke-width="2.6"/><path d="M63,152.5 V147 H67.5 Q67.5,142 71,142 Q74.5,142 74.5,147 H79 V152.5 Z" fill="none" stroke="#9a9a9a" stroke-width="1.8"/><rect x="76.2" y="160.2" width="18.8" height="24.8" fill="none" stroke="#a0a0a0" stroke-width="1.8"/><path d="M119.8,140.5 L128.4,157.5 M128.6,140.5 L120,157.5" stroke="#dcdcdc" stroke-width="1.1"/><circle cx="119.6" cy="161.3" r="3.2" fill="none" stroke="#3d9be0" stroke-width="1.8"/><circle cx="128.4" cy="161.3" r="3.2" fill="none" stroke="#3d9be0" stroke-width="1.8"/><path d="M121,199.5 H112.8 V180 H120.5 L124,183.3" fill="none" stroke="#e0e0e0" stroke-width="1.4"/><path d="M122.3,184 H130.5 L135.3,189 V202.3 H122.3 Z M130.5,184 V189 H135.3" fill="none" stroke="#e0e0e0" stroke-width="1.4"/><path d="M125.2,194.3 H132 M125.2,197.8 H132" stroke="#e0e0e0" stroke-width="1.2"/><path d="M113,229 L123.5,222 L133,230.5 L123,239.5 Z" fill="none" stroke="#f0c060" stroke-width="1.4" stroke-linejoin="round"/><path d="M116.5,234 L128,231 L123,239 Z" fill="#e9a52b"/><path d="M124.5,223 L128.5,218.5 L133,223 L129,227.5" fill="none" stroke="#e0e0e0" stroke-width="1.4"/><path d="M130,220 L134.5,215.5 Q136,214.5 137,216 L132.3,221.5" fill="none" stroke="#e0e0e0" stroke-width="1.4"/><path d="M555.3,171.3 L563.5,152.8 L571.7,171.3 M558.2,164.6 H568.8" fill="none" stroke="#e6e6e6" stroke-width="1.9"/><path d="M573.5,158 L576.8,154.3 L580,158" fill="none" stroke="#3d9be0" stroke-width="1.6"/><path d="M596.3,171.3 L602.5,157.8 L608.7,171.3 M598.5,166.3 H606.5" fill="none" stroke="#e6e6e6" stroke-width="1.8"/><path d="M609.3,154 L612.5,157.4 L615.8,154" fill="none" stroke="#3d9be0" stroke-width="1.6"/><text x="307.3" y="218" font-family="Liberation Sans" font-weight="700" font-size="21" fill="#e6e6e6" textLength="12" lengthAdjust="spacingAndGlyphs">B</text><text x="346" y="218" font-family="Liberation Serif" font-style="italic" font-size="22" fill="#e6e6e6">I</text><text x="382.5" y="216" font-family="Liberation Sans" font-size="19.5" fill="#e6e6e6">U</text><rect x="383" y="219.3" width="14" height="1.6" fill="#e6e6e6"/><rect x="444.5" y="200.5" width="22" height="19.5" fill="none" stroke="#e0e0e0" stroke-width="1.3" stroke-dasharray="1.3,1.7"/><path d="M455.5,201 V220 M445,210.3 H466" stroke="#e0e0e0" stroke-width="1.3" stroke-dasharray="1.3,1.7"/><rect x="444" y="221" width="23" height="2" fill="#f0f0f0"/><path d="M510,210.3 L518.5,201.5 L527,210.3 L518.5,219 Z" fill="none" stroke="#e0e0e0" stroke-width="1.4" stroke-linejoin="round"/><path d="M519,205.5 V199.5 Q519,197.5 520.5,197.5 Q522,197.5 522,199.5 V205" fill="none" stroke="#e0e0e0" stroke-width="1.2"/><path d="M526,203 Q530,204 529.5,210 Q527.5,207 526,206.5 Z" fill="#8cc4f0"/><rect x="509" y="217.9" width="24" height="6" fill="#f4f000"/><path d="M575.5,216.3 L582.2,200.5 L588.9,216.3 M578,210.3 H586.4" fill="none" stroke="#e6e6e6" stroke-width="1.9"/><rect x="569.8" y="217.9" width="24.7" height="6" fill="#e81313"/><rect x="652.9" y="151.89999999999998" width="21.899999999999977" height="1.6" fill="#e0e0e0"/><rect x="656.5" y="158.5" width="14.799999999999955" height="1.6" fill="#e0e0e0"/><rect x="652.9" y="164.79999999999998" width="21.899999999999977" height="1.6" fill="#e0e0e0"/><rect x="692" y="155.7" width="21.5" height="1.6" fill="#e0e0e0"/><rect x="695.8" y="162.29999999999998" width="14.300000000000068" height="1.6" fill="#e0e0e0"/><rect x="692" y="168.5" width="21.5" height="1.6" fill="#e0e0e0"/><rect x="731" y="161.79999999999998" width="22" height="1.6" fill="#e0e0e0"/><rect x="734.5" y="168.1" width="14.700000000000045" height="1.6" fill="#e0e0e0"/><rect x="731" y="174.39999999999998" width="22" height="1.6" fill="#e0e0e0"/><rect x="652.9" y="201.39999999999998" width="21.899999999999977" height="1.6" fill="#e0e0e0"/><rect x="652.9" y="207.2" width="15.100000000000023" height="1.6" fill="#e0e0e0"/><rect x="652.9" y="213.1" width="21.899999999999977" height="1.6" fill="#e0e0e0"/><rect x="652.9" y="219.2" width="14.100000000000023" height="1.6" fill="#e0e0e0"/><rect x="692" y="201.39999999999998" width="21.5" height="1.6" fill="#e0e0e0"/><rect x="695.8" y="207.2" width="14.300000000000068" height="1.6" fill="#e0e0e0"/><rect x="692" y="213.1" width="21.5" height="1.6" fill="#e0e0e0"/><rect x="695.8" y="219.2" width="14.300000000000068" height="1.6" fill="#e0e0e0"/><rect x="731" y="201.39999999999998" width="22" height="1.6" fill="#e0e0e0"/><rect x="737" y="207.2" width="16" height="1.6" fill="#e0e0e0"/><rect x="731" y="213.1" width="22" height="1.6" fill="#e0e0e0"/><rect x="738" y="219.2" width="15" height="1.6" fill="#e0e0e0"/><rect x="774" y="201.39999999999998" width="22" height="1.6" fill="#e0e0e0"/><rect x="786" y="207.2" width="10" height="1.6" fill="#e0e0e0"/><rect x="786" y="213.1" width="10" height="1.6" fill="#e0e0e0"/><rect x="774" y="219.2" width="22" height="1.6" fill="#e0e0e0"/><path d="M783.5,211 H775.5 M778.8,207.6 L775.3,211 L778.8,214.4" fill="none" stroke="#3d9be0" stroke-width="1.6"/><rect x="812.7" y="201.39999999999998" width="22.299999999999955" height="1.6" fill="#e0e0e0"/><rect x="825" y="207.2" width="10" height="1.6" fill="#e0e0e0"/><rect x="825" y="213.1" width="10" height="1.6" fill="#e0e0e0"/><rect x="812.7" y="219.2" width="22.299999999999955" height="1.6" fill="#e0e0e0"/><path d="M812.7,211 H821.5 M818.2,207.6 L821.7,211 L818.2,214.4" fill="none" stroke="#3d9be0" stroke-width="1.6"/><text x="0" y="0" transform="translate(776.5,170) rotate(-45)" font-family="Liberation Sans" font-size="15.5" fill="#e0e0e0">ab</text><path d="M781,174 L796,158.5 M790,158.2 H796.5 V164.7" fill="none" stroke="#3d9be0" stroke-width="1.6"/><text x="869.7" y="163.3" font-family="Liberation Sans" font-size="15" fill="#e0e0e0" textLength="18" lengthAdjust="spacingAndGlyphs">ab</text><text x="869.7" y="174.5" font-family="Liberation Sans" font-size="15" fill="#e0e0e0">c</text><path d="M889,165 Q892,171.5 885,172.5 H878.5 M882,168.8 L878.3,172.5 L882,176" fill="none" stroke="#3d9be0" stroke-width="1.6"/><rect x="867.2" y="201" width="22" height="21" fill="none" stroke="#e0e0e0" stroke-width="1.4"/><path d="M867.2,205.5 H889.2 M867.2,217.5 H889.2 M878.2,201 V205.5 M878.2,217.5 V222" stroke="#e0e0e0" stroke-width="1.2"/><rect x="867.2" y="205.5" width="22" height="12" fill="none" stroke="#3d9be0" stroke-width="1.3"/><path d="M871,211.5 H885.5 M874,208.5 L871,211.5 L874,214.5 M882.5,208.5 L885.5,211.5 L882.5,214.5" fill="none" stroke="#3d9be0" stroke-width="1.4"/><text x="1106.8" y="221.2" font-family="Liberation Sans" font-size="25" fill="#d8d8d8" textLength="12" lengthAdjust="spacingAndGlyphs">$</text><circle cx="1170.4" cy="207" r="4.6" fill="none" stroke="#d8d8d8" stroke-width="1.7"/><circle cx="1180.6" cy="217.3" r="4.6" fill="none" stroke="#d8d8d8" stroke-width="1.7"/><path d="M1182.5,201.3 L1168,222.6" stroke="#d8d8d8" stroke-width="1.7"/><path d="M1215.5,204 Q1220.5,204 1220.5,210 Q1220.5,218 1210,221.5 L1209.5,220 Q1214.5,217.5 1215,212.5 Q1210.5,212.5 1210.5,208.5 Q1210.5,204 1215.5,204 Z" fill="#e0e0e0"/><text x="1260.2" y="210.3" font-family="Liberation Sans" font-size="14.5" fill="#d8d8d8" textLength="7.6" lengthAdjust="spacingAndGlyphs">0</text><text x="1248.6" y="222.6" font-family="Liberation Sans" font-size="14.5" fill="#d8d8d8" textLength="19.2" lengthAdjust="spacingAndGlyphs">.00</text><path d="M1258.8,206.3 H1245.8 M1249.8,202.2 L1245.6,206.3 L1249.8,210.4" fill="none" stroke="#3d9be0" stroke-width="1.7"/><text x="1287.8" y="210.3" font-family="Liberation Sans" font-size="14.5" fill="#d8d8d8" textLength="19" lengthAdjust="spacingAndGlyphs">.00</text><text x="1295.5" y="222.6" font-family="Liberation Sans" font-size="14.5" fill="#d8d8d8" textLength="11.3" lengthAdjust="spacingAndGlyphs">.0</text><path d="M1283.6,217 H1296.6 M1292.4,212.9 L1296.6,217 L1292.4,221.1" fill="none" stroke="#3d9be0" stroke-width="1.7"/><rect x="1348.5" y="145.5" width="41.3" height="32.8" fill="none" stroke="#d8d8d8" stroke-width="1.7"/><path d="M1362.3,145.5 V178.3" stroke="#d8d8d8" stroke-width="1.7"/><path d="M1376.0,145.5 V178.3" stroke="#d8d8d8" stroke-width="1.7"/><path d="M1348.5,156.4 H1389.8" stroke="#d8d8d8" stroke-width="1.7"/><path d="M1348.5,167.4 H1389.8" stroke="#d8d8d8" stroke-width="1.7"/><rect x="1355.8" y="157" width="37" height="10.5" fill="#0b6fd0" stroke="#6cc0f5" stroke-width="1.3"/><path d="M1376.5,157 V167.5 M1362.5,157 V167.5" stroke="#6cc0f5" stroke-width="1.1"/><rect x="1346" y="158.6" width="15.5" height="6.2" fill="#292929"/><path d="M1346.5,159.3 H1361 M1346.5,164 H1361" stroke="#5fb0ea" stroke-width="1.1"/><path d="M1356.5,150.8 L1345,161.6 L1356.5,172" fill="none" stroke="#5fb0ea" stroke-width="1.6"/><rect x="1413.5" y="145.5" width="41.2" height="32.8" fill="none" stroke="#d8d8d8" stroke-width="1.7"/><path d="M1427.2,145.5 V178.3" stroke="#d8d8d8" stroke-width="1.7"/><path d="M1441.0,145.5 V178.3" stroke="#d8d8d8" stroke-width="1.7"/><path d="M1413.5,156.4 H1454.7" stroke="#d8d8d8" stroke-width="1.7"/><path d="M1413.5,167.4 H1454.7" stroke="#d8d8d8" stroke-width="1.7"/><rect x="1413.5" y="157" width="5" height="10.5" fill="#292929"/><path d="M1419.4,157 H1440.5 L1444.5,162.2 L1440.5,167.5 H1419.4 Z" fill="#0b6fd0" stroke="#6cc0f5" stroke-width="1.2"/><path d="M1430,157 V167.5" stroke="#6cc0f5" stroke-width="1.1"/><path d="M1440,154.5 L1456.6,171.3 M1456.6,154.5 L1440,171.3" stroke="#e35a5a" stroke-width="1.7"/><rect x="1479.7" y="145.5" width="40.8" height="32.8" fill="none" stroke="#d8d8d8" stroke-width="1.7"/><path d="M1490.4,145.5 V178.3 M1510.3,145.5 V178.3 M1479.7,156.4 H1520.5 M1479.7,167 H1520.5" stroke="#d8d8d8" stroke-width="1.7"/><rect x="1490.6" y="156.6" width="19.6" height="10.4" fill="#0b6fd0" stroke="#6cc0f5" stroke-width="1.3"/><path d="M1488.3,140.3 H1512 M1488.3,138 V142.6 M1512,138 V142.6" stroke="#5fb0ea" stroke-width="1.7"/><path d="M1583.5,143 H1566 L1576,152 L1566,161.5 H1583.5" fill="none" stroke="#e0e0e0" stroke-width="1.6"/><rect x="1564" y="181.5" width="22" height="19" fill="none" stroke="#d0d0d0" stroke-width="1.6"/><path d="M1564,185.5 H1586" stroke="#d0d0d0" stroke-width="1.2"/><path d="M1575,188 V198 M1571,194 L1575,198 L1579,194" fill="none" stroke="#3d9be0" stroke-width="1.7"/><path d="M1564.5,232.5 L1576.5,219.5 L1586,228.5 L1574,241 Z" fill="none" stroke="#b35ad9" stroke-width="1.6" stroke-linejoin="round"/><path d="M1564.5,232.5 L1568.5,228.2 L1578.2,237.4 L1574,241 Z" fill="#b35ad9"/><text x="1728.8" y="160.5" font-family="Liberation Sans" font-size="26" fill="#3d9be0" textLength="16" lengthAdjust="spacingAndGlyphs">A</text><path d="M1731,164.5 H1743 L1731.5,181.2 H1743.5" fill="none" stroke="#e0e0e0" stroke-width="1.6"/><path d="M1748,151.5 H1771.5 L1763,163 V174.5 H1756.5 V163 Z" fill="none" stroke="#e0e0e0" stroke-width="1.6" stroke-linejoin="round"/><circle cx="1826" cy="156.8" r="15.3" fill="none" stroke="#e0e0e0" stroke-width="1.6"/><path d="M1815,167.5 L1798.8,184" stroke="#e0e0e0" stroke-width="1.7"/><rect x="1896.3" y="141.3" width="39.5" height="41" fill="none" stroke="#d4562a" stroke-width="2.2"/><rect x="1899.6" y="144.6" width="33" height="34.4" fill="none" stroke="#b84a26" stroke-width="1"/><rect x="1901.5" y="147.5" width="11.5" height="12" fill="none" stroke="#d4562a" stroke-width="2"/><rect x="1919.3" y="147.5" width="11.5" height="12" fill="none" stroke="#d4562a" stroke-width="2"/><rect x="1901.5" y="165.3" width="11.5" height="12" fill="none" stroke="#d4562a" stroke-width="2"/><rect x="1919.3" y="165.3" width="11.5" height="12" fill="none" stroke="#d4562a" stroke-width="2"/><rect x="1989.5" y="141.5" width="41" height="41" fill="none" stroke="#b8b8b8" stroke-width="1.5"/><path d="M2003.2,141.5 V182.5" stroke="#b8b8b8" stroke-width="1.5"/><path d="M2016.8,141.5 V182.5" stroke="#b8b8b8" stroke-width="1.5"/><path d="M1989.5,149.7 H2030.5" stroke="#b8b8b8" stroke-width="1.5"/><path d="M1989.5,157.9 H2030.5" stroke="#b8b8b8" stroke-width="1.5"/><path d="M1989.5,166.1 H2030.5" stroke="#b8b8b8" stroke-width="1.5"/><path d="M1989.5,174.3 H2030.5" stroke="#b8b8b8" stroke-width="1.5"/><rect x="1989.5" y="141.5" width="41" height="7" fill="#8a8a8a"/><circle cx="2006.5" cy="160.5" r="11.3" fill="#292929" stroke="#e0e0e0" stroke-width="1.8"/><path d="M2014.5,168.5 L2029,183" stroke="#e0e0e0" stroke-width="2"/><rect x="2001" y="159" width="3" height="7" fill="#9a9a9a"/><rect x="2005" y="154" width="3" height="12" fill="#d8d8d8"/><rect x="2009" y="156" width="3" height="10" fill="#3d9be0"/></svg><div style="position:absolute;left:2156px;top:142.5px;width:112.5px;height:112.5px;border-radius:50%;background:#fff;"></div><div style="position:absolute;left:2181.70px;top:173.40px;width:61.10px;height:52.30px;background:#5b5fe8;"></div><div style="position:absolute;left:2190.00px;top:181.00px;width:18.40px;height:15.00px;background:#ffffff;"></div><div style="position:absolute;left:2190.00px;top:203.40px;width:18.40px;height:15.00px;background:#ffffff;"></div><div style="position:absolute;left:2216.80px;top:181.00px;width:18.20px;height:15.00px;background:#ffffff;"></div><div style="position:absolute;left:2216.80px;top:203.40px;width:18.20px;height:15.00px;background:#ffffff;"></div><svg style="left:2400px;top:150px" width="64" height="52"><path d="M23.5,17.2 A14.2,14.2 0 1 0 40.3,17.2" fill="none" stroke="#fff" stroke-width="7.6"/><rect x="28" y="4.7" width="8" height="26" rx="4" fill="#fff"/></svg><div style="position:absolute;left:2862.80px;top:278.00px;width:26.10px;height:1391.60px;background:#161616;border-radius:13px;"></div><svg style="left:2866px;top:283px" width="20" height="16"><polygon points="10,2.5 17,12.5 3,12.5" fill="#a0a0a0" stroke="#a0a0a0" stroke-width="1.5" stroke-linejoin="round"/></svg><div style="position:absolute;left:2869.70px;top:303.40px;width:12.50px;height:1113.60px;background:#9e9e9e;border-radius:6.3px;"></div><svg style="left:2866px;top:1651px" width="20" height="16"><polygon points="3,3 17,3 10,13" fill="#a0a0a0" stroke="#a0a0a0" stroke-width="1.5" stroke-linejoin="round"/></svg><div style="position:absolute;left:11.00px;top:1670.00px;width:2880.00px;height:48.00px;background:#0d0d0d;"></div><div style="position:absolute;left:11.00px;top:1717.30px;width:2880.00px;height:1.00px;background:#2e2e2e;"></div><div style="position:absolute;left:11.00px;top:1718.30px;width:2880.00px;height:32.70px;background:#161616;"></div><svg style="left:0;top:1670px" width="120" height="48"><polyline points="55,15.5 46,23.6 55,31.7" fill="none" stroke="#cfcfcf" stroke-width="1.5"/><polyline points="94.5,15.5 103.5,23.6 94.5,31.7" fill="none" stroke="#cfcfcf" stroke-width="1.5"/></svg><div style="position:absolute;left:298.70px;top:1676.10px;width:128.30px;height:35.50px;background:#fde86c;border-radius:7px;"></div><div style="position:absolute;left:440.00px;top:1676.10px;width:106.10px;height:35.50px;background:#fde86c;border-radius:7px;"></div><div style="position:absolute;left:559.00px;top:1676.10px;width:157.20px;height:35.50px;background:#fde86c;border-radius:7px;"></div><div style="position:absolute;left:730.20px;top:1676.10px;width:88.30px;height:35.50px;background:#fde86c;border-radius:7px;"></div><div style="position:absolute;left:832.10px;top:1676.10px;width:86.40px;height:35.50px;background:#fde86c;border-radius:7px;"></div><div style="position:absolute;left:932.10px;top:1676.10px;width:112.70px;height:35.50px;background:#fde86c;border-radius:7px;"></div><div style="position:absolute;left:1058.10px;top:1676.10px;width:89.90px;height:35.50px;background:#fde86c;border-radius:7px;"></div><div style="position:absolute;left:1161.00px;top:1676.10px;width:41.80px;height:35.50px;background:#4db3e8;border-radius:7px;"></div><div style="position:absolute;left:1215.60px;top:1676.10px;width:48.40px;height:35.50px;background:#4db3e8;border-radius:7px;"></div><div style="position:absolute;left:1277.00px;top:1676.10px;width:47.40px;height:35.50px;background:#4db3e8;border-radius:7px;"></div><div style="position:absolute;left:1338.00px;top:1676.10px;width:114.60px;height:35.50px;background:#4db3e8;border-radius:7px;"></div><div style="position:absolute;left:1466.20px;top:1676.10px;width:114.30px;height:35.50px;background:#4db3e8;border-radius:7px;"></div><div style="position:absolute;left:1594.50px;top:1676.10px;width:113.60px;height:35.50px;background:#4db3e8;border-radius:7px;"></div><div style="position:absolute;left:1781.80px;top:1676.10px;width:71.80px;height:35.50px;background:#4db3e8;border-radius:7px;"></div><div style="position:absolute;left:1867.20px;top:1676.10px;width:84.40px;height:35.50px;background:#4db3e8;border-radius:7px;"></div><div style="position:absolute;left:1965.30px;top:1676.10px;width:63.30px;height:35.50px;background:#4db3e8;border-radius:7px;"></div><div style="position:absolute;left:291.60px;top:1680.30px;width:1.20px;height:27.50px;background:#8a8a8a;"></div><div style="position:absolute;left:432.80px;top:1680.30px;width:1.20px;height:27.50px;background:#8a8a8a;"></div><div style="position:absolute;left:551.40px;top:1680.30px;width:1.20px;height:27.50px;background:#8a8a8a;"></div><div style="position:absolute;left:723.10px;top:1680.30px;width:1.20px;height:27.50px;background:#8a8a8a;"></div><div style="position:absolute;left:824.70px;top:1680.30px;width:1.20px;height:27.50px;background:#8a8a8a;"></div><div style="position:absolute;left:925.00px;top:1680.30px;width:1.20px;height:27.50px;background:#8a8a8a;"></div><div style="position:absolute;left:1051.00px;top:1680.30px;width:1.20px;height:27.50px;background:#8a8a8a;"></div><div style="position:absolute;left:1153.90px;top:1680.30px;width:1.20px;height:27.50px;background:#8a8a8a;"></div><div style="position:absolute;left:1208.50px;top:1680.30px;width:1.20px;height:27.50px;background:#8a8a8a;"></div><div style="position:absolute;left:1269.90px;top:1680.30px;width:1.20px;height:27.50px;background:#8a8a8a;"></div><div style="position:absolute;left:1330.60px;top:1680.30px;width:1.20px;height:27.50px;background:#8a8a8a;"></div><div style="position:absolute;left:1458.50px;top:1680.30px;width:1.20px;height:27.50px;background:#8a8a8a;"></div><div style="position:absolute;left:1586.70px;top:1680.30px;width:1.20px;height:27.50px;background:#8a8a8a;"></div><div style="position:absolute;left:1714.00px;top:1680.30px;width:1.20px;height:27.50px;background:#8a8a8a;"></div><div style="position:absolute;left:1774.70px;top:1680.30px;width:1.20px;height:27.50px;background:#8a8a8a;"></div><div style="position:absolute;left:1860.10px;top:1680.30px;width:1.20px;height:27.50px;background:#8a8a8a;"></div><div style="position:absolute;left:1958.20px;top:1680.30px;width:1.20px;height:27.50px;background:#8a8a8a;"></div><div style="position:absolute;left:2034.80px;top:1680.30px;width:1.20px;height:27.50px;background:#8a8a8a;"></div><div style="position:absolute;left:2041.9px;top:1676.1px;width:29.9px;height:35.5px;overflow:hidden;"><div style="position:absolute;left:0;top:0;width:60px;height:35.5px;background:#4db3e8;border-radius:7px;"></div><div style="position:absolute;left:12.6px;top:9.1px;font-size:21px;line-height:1;color:#141414;white-space:nowrap;">Sc</div></div><div style="position:absolute;left:1721.1px;top:1669px;width:48.1px;height:43px;background:linear-gradient(#ffffff 20%, #c9e5f7 100%);border-radius:0 0 8px 8px;box-shadow:inset 0 -1.5px 0 #ffffff, inset 1.5px 0 0 #ffffff, inset -1.5px 0 0 #ffffff;"></div><svg style="left:1713px;top:1669px" width="64" height="10"><path d="M0,0 H8.1 V8 Q8.1,0 0,0 Z" fill="#ffffff"/><path d="M64,0 H56.2 V8 Q56.2,0 64,0 Z" fill="#ffffff"/></svg><div style="position:absolute;left:1733.20px;top:1705.40px;width:23.70px;height:2.80px;background:#177a43;"></div><svg style="left:2080px;top:1680px" width="130" height="28"><circle cx="9" cy="12.5" r="2.2" fill="#e0e0e0"/><circle cx="14.5" cy="12.5" r="2.2" fill="#e0e0e0"/><circle cx="20" cy="12.5" r="2.2" fill="#e0e0e0"/><path d="M63.2,3 V22 M53.7,12.5 H72.7" stroke="#e0e0e0" stroke-width="1.6"/><circle cx="111.9" cy="5.5" r="1.7" fill="#e0e0e0"/><circle cx="111.9" cy="12.5" r="1.7" fill="#e0e0e0"/><circle cx="111.9" cy="19.5" r="1.7" fill="#e0e0e0"/></svg><div style="position:absolute;left:2215.70px;top:1679.90px;width:644.70px;height:26.20px;background:#161616;border-radius:13px;"></div><div style="position:absolute;left:2241.30px;top:1686.40px;width:575.50px;height:12.90px;background:#9a9a9a;border-radius:6.5px;"></div><svg style="left:2220px;top:1683px" width="640" height="20"><polygon points="4,9.5 12,4 12,15" fill="#a0a0a0" stroke="#a0a0a0" stroke-width="1.4" stroke-linejoin="round"/><polygon points="632,9.5 624,4 624,15" fill="#a0a0a0" stroke="#a0a0a0" stroke-width="1.4" stroke-linejoin="round"/></svg><svg style="left:96px;top:1722px" width="30" height="26"><path d="M4,4.5 H24.5 V13 M4,4.5 V21.5 H12.5" fill="none" stroke="#f0f0f0" stroke-width="1.8"/><path d="M4,8 H24.5 M5,11 H9 M5,14 H9 M5,17 H9" stroke="#f0f0f0" stroke-width="1.4"/><circle cx="17.5" cy="16.7" r="6.3" fill="#161616" stroke="#f0f0f0" stroke-width="1.8"/><circle cx="17.5" cy="16.7" r="3" fill="#f0f0f0"/></svg><svg style="left:144px;top:1722px" width="28" height="26"><circle cx="11.3" cy="4.8" r="2.6" fill="none" stroke="#f0f0f0" stroke-width="1.6"/><path d="M3.5,6.5 Q6,9.8 9,10 H13.6 Q17,9.8 19.5,6.5 M9,10 V15 L5.5,22.5 M13.6,10 V14.5" fill="none" stroke="#f0f0f0" stroke-width="1.7" stroke-linecap="round" stroke-linejoin="round"/><path d="M13,17 L21.5,24.5 M21.5,16.5 L13,24.5" stroke="#f0f0f0" stroke-width="1.6"/></svg><div style="position:absolute;left:2445.00px;top:1718.30px;width:59.80px;height:32.20px;background:#2a2a2a;"></div><svg style="left:2460px;top:1720px" width="160" height="28"><rect x="5" y="5" width="18.5" height="18.5" fill="none" stroke="#e8e8e8" stroke-width="1.5"/><path d="M11.2,5 V23.5 M17.3,5 V23.5 M5,11.2 H23.5 M5,17.3 H23.5" stroke="#e8e8e8" stroke-width="1.5"/><rect x="65" y="5" width="20.5" height="18.5" fill="none" stroke="#e8e8e8" stroke-width="1.5"/><rect x="69.5" y="8.5" width="11.5" height="11.5" fill="none" stroke="#e8e8e8" stroke-width="1.3"/><path d="M72,12 H78.5 M72,14.5 H78.5 M72,17 H78.5" stroke="#e8e8e8" stroke-width="1"/><rect x="125" y="4.8" width="20" height="19.2" fill="none" stroke="#f0f0f0" stroke-width="2"/><path d="M130.9,5 V15.7 M137.1,5 V15.7 M125,15.7 H138" fill="none" stroke="#f0f0f0" stroke-width="1.8"/></svg><div style="position:absolute;left:2632.80px;top:1734.00px;width:12.00px;height:1.20px;background:#d8d8d8;"></div><div style="position:absolute;left:2653.00px;top:1733.60px;width:147.60px;height:1.20px;background:#a8a8a8;"></div><div style="position:absolute;left:2726.50px;top:1726.30px;width:7.10px;height:16.30px;background:#a8a8a8;border-radius:1px;"></div><svg style="left:2806px;top:1726px" width="18" height="18"><path d="M8.8,2 V15.5 M2,8.8 H15.5" stroke="#d8d8d8" stroke-width="1.4"/></svg>
<div class="t" style="left:53.00px;top:281.23px;font-size:17.14px;color:#ffffff;">A</div><div class="t" style="left:90.30px;top:281.23px;font-size:17.14px;color:#d4d4d4;">B</div><div class="t" style="left:141.00px;top:281.23px;font-size:17.14px;color:#d4d4d4;">C</div><div class="t" style="left:191.50px;top:281.23px;font-size:17.14px;color:#d4d4d4;">D</div><div class="t" style="left:242.85px;top:281.23px;font-size:17.14px;color:#d4d4d4;">E</div><div class="t" style="left:301.30px;top:281.23px;font-size:17.14px;color:#d4d4d4;">F</div><div class="t" style="left:358.55px;top:281.23px;font-size:17.14px;color:#d4d4d4;">G</div><div class="t" style="left:418.30px;top:281.23px;font-size:17.14px;color:#d4d4d4;">H</div><div class="t" style="left:508.00px;top:281.23px;font-size:17.14px;color:#d4d4d4;">I</div><div class="t" style="left:620.65px;top:281.23px;font-size:17.14px;color:#d4d4d4;">J</div><div class="t" style="left:741.30px;top:281.23px;font-size:17.14px;color:#d4d4d4;">K</div><div class="t" style="left:865.80px;top:281.23px;font-size:17.14px;color:#d4d4d4;">L</div><div class="t" style="left:986.65px;top:281.23px;font-size:17.14px;color:#d4d4d4;">M</div><div class="t" style="left:1110.50px;top:281.23px;font-size:17.14px;color:#d4d4d4;">N</div><div class="t" style="left:1233.15px;top:281.23px;font-size:17.14px;color:#d4d4d4;">O</div><div class="t" style="left:1307.85px;top:281.23px;font-size:17.14px;color:#d4d4d4;">P</div><div class="t" style="left:1362.40px;top:281.23px;font-size:17.14px;color:#d4d4d4;">Q</div><div class="t" style="left:1447.40px;top:281.23px;font-size:17.14px;color:#d4d4d4;">R</div><div class="t" style="left:1533.40px;top:281.23px;font-size:17.14px;color:#d4d4d4;">S</div><div class="t" style="left:1618.40px;top:281.23px;font-size:17.14px;color:#d4d4d4;">T</div><div class="t" style="left:1702.40px;top:281.23px;font-size:17.14px;color:#d4d4d4;">U</div><div class="t" style="left:1787.90px;top:281.23px;font-size:17.14px;color:#d4d4d4;">V</div><div class="t" style="left:1870.40px;top:281.23px;font-size:17.14px;color:#d4d4d4;">W</div><div class="t" style="left:1957.90px;top:281.23px;font-size:17.14px;color:#d4d4d4;">X</div><div class="t" style="left:2042.90px;top:281.23px;font-size:17.14px;color:#d4d4d4;">Y</div><div class="t" style="left:2128.90px;top:281.23px;font-size:17.14px;color:#d4d4d4;">Z</div><div class="t" style="left:2207.19px;top:281.23px;font-size:17.14px;color:#d4d4d4;">AA</div><div class="t" style="left:2292.69px;top:281.23px;font-size:17.14px;color:#d4d4d4;">AB</div><div class="t" style="left:2377.19px;top:281.23px;font-size:17.14px;color:#d4d4d4;">AC</div><div class="t" style="left:2462.19px;top:281.23px;font-size:17.14px;color:#d4d4d4;">AD</div><div class="t" style="left:2547.69px;top:281.23px;font-size:17.14px;color:#d4d4d4;">AE</div><div class="t" style="left:2633.19px;top:281.23px;font-size:17.14px;color:#d4d4d4;">AF</div><div class="t" style="left:2716.69px;top:281.23px;font-size:17.14px;color:#d4d4d4;">AG</div><div class="t" style="left:2802.69px;top:281.23px;font-size:17.14px;color:#d4d4d4;">AH</div><div class="t" style="left:24.00px;top:316.13px;font-size:17.14px;color:#ffffff;">1</div><div class="t" style="left:24.50px;top:347.73px;font-size:17.14px;color:#d4d4d4;">2</div><div class="t" style="left:24.50px;top:379.73px;font-size:17.14px;color:#d4d4d4;">3</div><div class="t" style="left:24.00px;top:402.43px;font-size:17.14px;color:#d4d4d4;">4</div><div class="t" style="left:24.50px;top:433.43px;font-size:17.14px;color:#d4d4d4;">5</div><div class="t" style="left:24.50px;top:465.53px;font-size:17.14px;color:#d4d4d4;">7</div><div class="t" style="left:24.50px;top:486.63px;font-size:17.14px;color:#d4d4d4;">8</div><div class="t" style="left:24.50px;top:519.53px;font-size:17.14px;color:#d4d4d4;">9</div><div class="t" style="left:19.24px;top:552.73px;font-size:17.14px;color:#d4d4d4;">10</div><div class="t" style="left:19.87px;top:585.43px;font-size:17.14px;color:#d4d4d4;">11</div><div class="t" style="left:19.24px;top:618.43px;font-size:17.14px;color:#d4d4d4;">12</div><div class="t" style="left:19.24px;top:650.93px;font-size:17.14px;color:#d4d4d4;">13</div><div class="t" style="left:18.74px;top:684.33px;font-size:17.14px;color:#d4d4d4;">14</div><div class="t" style="left:19.24px;top:717.53px;font-size:17.14px;color:#d4d4d4;">15</div><div class="t" style="left:19.24px;top:750.53px;font-size:17.14px;color:#d4d4d4;">16</div><div class="t" style="left:19.24px;top:783.53px;font-size:17.14px;color:#d4d4d4;">17</div><div class="t" style="left:19.24px;top:816.03px;font-size:17.14px;color:#d4d4d4;">18</div><div class="t" style="left:19.24px;top:849.63px;font-size:17.14px;color:#d4d4d4;">19</div><div class="t" style="left:19.74px;top:882.63px;font-size:17.14px;color:#d4d4d4;">20</div><div class="t" style="left:19.74px;top:915.33px;font-size:17.14px;color:#d4d4d4;">21</div><div class="t" style="left:19.74px;top:948.33px;font-size:17.14px;color:#d4d4d4;">22</div><div class="t" style="left:19.74px;top:981.23px;font-size:17.14px;color:#d4d4d4;">23</div><div class="t" style="left:19.24px;top:1014.93px;font-size:17.14px;color:#d4d4d4;">24</div><div class="t" style="left:19.74px;top:1044.43px;font-size:17.14px;color:#d4d4d4;">25</div><div class="t" style="left:19.74px;top:1075.23px;font-size:17.14px;color:#d4d4d4;">26</div><div class="t" style="left:19.74px;top:1114.43px;font-size:17.14px;color:#d4d4d4;">29</div><div class="t" style="left:19.74px;top:1146.53px;font-size:17.14px;color:#d4d4d4;">31</div><div class="t" style="left:19.74px;top:1174.43px;font-size:17.14px;color:#d4d4d4;">32</div><div class="t" style="left:19.74px;top:1194.13px;font-size:17.14px;color:#d4d4d4;">33</div><div class="t" style="left:19.24px;top:1216.93px;font-size:17.14px;color:#d4d4d4;">34</div><div class="t" style="left:19.74px;top:1238.53px;font-size:17.14px;color:#d4d4d4;">35</div><div class="t" style="left:19.74px;top:1266.53px;font-size:17.14px;color:#d4d4d4;">36</div><div class="t" style="left:19.74px;top:1294.23px;font-size:17.14px;color:#d4d4d4;">37</div><div class="t" style="left:19.74px;top:1316.23px;font-size:17.14px;color:#d4d4d4;">38</div><div class="t" style="left:19.74px;top:1345.03px;font-size:17.14px;color:#d4d4d4;">39</div><div class="t" style="left:19.74px;top:1372.53px;font-size:17.14px;color:#d4d4d4;">40</div><div class="t" style="left:19.74px;top:1394.43px;font-size:17.14px;color:#d4d4d4;">41</div><div class="t" style="left:19.74px;top:1416.33px;font-size:17.14px;color:#d4d4d4;">42</div><div class="t" style="left:19.74px;top:1441.33px;font-size:17.14px;color:#d4d4d4;">43</div><div class="t" style="left:19.24px;top:1469.53px;font-size:17.14px;color:#d4d4d4;">44</div><div class="t" style="left:19.74px;top:1491.13px;font-size:17.14px;color:#d4d4d4;">45</div><div class="t" style="left:19.74px;top:1513.23px;font-size:17.14px;color:#d4d4d4;">46</div><div class="t" style="left:19.74px;top:1541.23px;font-size:17.14px;color:#d4d4d4;">47</div><div class="t" style="left:19.74px;top:1569.43px;font-size:17.14px;color:#d4d4d4;">48</div><div class="t" style="left:19.74px;top:1591.53px;font-size:17.14px;color:#d4d4d4;">49</div><div class="t" style="left:19.74px;top:1619.43px;font-size:17.14px;color:#d4d4d4;">50</div><div class="t" style="left:19.74px;top:1647.63px;font-size:17.14px;color:#d4d4d4;">51</div><div class="t" style="left:75.23px;top:302.51px;font-size:32.57px;color:#222222;font-weight:700;transform:scaleX(0.9832);">Breakeven Analysis</div><div class="t" style="left:76.60px;top:338.66px;font-size:26.29px;color:#000000;font-weight:700;transform:scaleX(1.0237);">ABC Company Inc.</div><div class="t" style="left:74.50px;top:373.89px;font-size:16.71px;color:#2f7be9;font-weight:700;transform:scaleX(1.1131);">Go to Table of Contents</div><div class="t" style="left:224.31px;top:424.51px;font-size:25.29px;color:#fff;font-weight:700;transform:scaleX(0.9939);">Breakeven date</div><div class="t" style="left:275.31px;top:458.77px;font-size:22.86px;color:#fff;font-weight:700;transform:scaleX(1.0865);">May-26</div><div class="t" style="left:929.30px;top:424.51px;font-size:25.29px;color:#fff;font-weight:700;">Months to breakeven</div><div class="t" style="left:1044.80px;top:458.77px;font-size:22.86px;color:#fff;font-weight:700;transform:scaleX(0.9846);">5</div><div class="t" style="left:520.52px;top:509.64px;font-size:26.43px;color:#fff;font-weight:700;transform:scaleX(1.0814);">Breakeven Chart ($'000)</div><div class="t" style="left:482.13px;top:1067.64px;font-size:26.43px;color:#fff;font-weight:700;transform:scaleX(1.0746);">Breakeven Calculation ($'000)</div><div class="t" style="left:81.15px;top:1108.16px;font-size:19.57px;color:#fff;font-weight:700;transform:scaleX(0.9535);">Fiscal Year</div><div class="t" style="left:725.53px;top:1108.76px;font-size:18.29px;color:#fff;font-weight:700;transform:scaleX(1.1300);">2026</div><div class="t" style="left:848.53px;top:1108.76px;font-size:18.29px;color:#fff;font-weight:700;transform:scaleX(1.1300);">2027</div><div class="t" style="left:971.38px;top:1108.76px;font-size:18.29px;color:#fff;font-weight:700;transform:scaleX(1.1300);">2028</div><div class="t" style="left:1094.23px;top:1108.76px;font-size:18.29px;color:#fff;font-weight:700;transform:scaleX(1.1300);">2029</div><div class="t" style="left:1217.38px;top:1108.76px;font-size:18.29px;color:#fff;font-weight:700;transform:scaleX(1.1300);">2030</div><div class="t" style="left:75.10px;top:1141.69px;font-size:21.43px;color:#fff;font-weight:700;transform:scaleX(1.0042);">Revenue Breakeven level (Annual)</div><div class="t" style="left:75.09px;top:1168.99px;font-size:21.43px;color:#fff;font-weight:700;transform:scaleX(1.0080);">Revenue Breakeven level (Monthly)</div><div class="t" style="left:90.50px;top:1216.73px;font-size:17.14px;color:#111111;transform:scaleX(0.9951);">Revenue</div><div class="t" style="left:91.50px;top:1238.63px;font-size:17.14px;color:#111111;transform:scaleX(0.9019);">COGS</div><div class="t" style="left:75.80px;top:1263.24px;font-size:19.71px;color:#fff;font-weight:700;transform:scaleX(1.0455);">Gross Margin</div><div class="t" style="left:76.20px;top:1290.40px;font-size:18.00px;color:#111111;font-weight:700;font-style:italic;transform:scaleX(1.0473);">Gross Margin %</div><div class="t" style="left:91.50px;top:1316.23px;font-size:17.14px;color:#111111;transform:scaleX(0.9974);">Variable Expenses</div><div class="t" style="left:75.80px;top:1341.14px;font-size:19.71px;color:#fff;font-weight:700;transform:scaleX(1.0774);">Contribution Margin</div><div class="t" style="left:76.20px;top:1368.70px;font-size:18.00px;color:#111111;font-weight:700;font-style:italic;transform:scaleX(1.0706);">Contribution Margin %</div><div class="t" style="left:90.50px;top:1393.73px;font-size:17.14px;color:#111111;transform:scaleX(0.9958);">Payroll Expenses</div><div class="t" style="left:90.51px;top:1415.43px;font-size:17.14px;color:#111111;transform:scaleX(0.9902);">Fixed Expenses</div><div class="t" style="left:74.75px;top:1439.24px;font-size:19.71px;color:#fff;font-weight:700;transform:scaleX(1.0526);">EBITDA</div><div class="t" style="left:76.20px;top:1465.70px;font-size:18.00px;color:#111111;font-weight:700;font-style:italic;transform:scaleX(1.0795);">EBITDA %</div><div class="t" style="left:90.46px;top:1491.03px;font-size:17.14px;color:#111111;transform:scaleX(1.0397);">Depreciation &amp; Amortization</div><div class="t" style="left:90.47px;top:1512.63px;font-size:17.14px;color:#111111;transform:scaleX(1.0347);">Interest Expense</div><div class="t" style="left:74.71px;top:1537.44px;font-size:19.71px;color:#fff;font-weight:700;transform:scaleX(1.0901);">Net Profit Before Tax</div><div class="t" style="left:76.20px;top:1565.40px;font-size:18.00px;color:#111111;font-weight:700;font-style:italic;transform:scaleX(1.0809);">Net Profit Before Tax %</div><div class="t" style="left:91.50px;top:1590.53px;font-size:17.14px;color:#111111;transform:scaleX(1.0217);">Corporate Tax Expense</div><div class="t" style="left:74.70px;top:1615.34px;font-size:19.71px;color:#fff;font-weight:700;transform:scaleX(1.1015);">Net Profit After Tax</div><div class="t" style="left:76.20px;top:1643.30px;font-size:18.00px;color:#111111;font-weight:700;font-style:italic;transform:scaleX(1.0887);">Net Profit After Tax %</div><div class="t" style="left:765.16px;top:1142.03px;font-size:19.14px;color:#fff;font-weight:700;transform:scaleX(1.0500);">163</div><div class="t" style="left:888.16px;top:1142.03px;font-size:19.14px;color:#fff;font-weight:700;transform:scaleX(1.0500);">226</div><div class="t" style="left:1009.81px;top:1142.03px;font-size:19.14px;color:#fff;font-weight:700;transform:scaleX(1.0500);">304</div><div class="t" style="left:1133.86px;top:1142.03px;font-size:19.14px;color:#fff;font-weight:700;transform:scaleX(1.0500);">319</div><div class="t" style="left:1256.11px;top:1142.03px;font-size:19.14px;color:#fff;font-weight:700;transform:scaleX(1.0500);">365</div><div class="t" style="left:775.28px;top:1169.73px;font-size:19.14px;color:#fff;font-weight:700;transform:scaleX(1.0500);">14</div><div class="t" style="left:899.33px;top:1169.73px;font-size:19.14px;color:#fff;font-weight:700;transform:scaleX(1.0500);">19</div><div class="t" style="left:1020.98px;top:1169.73px;font-size:19.14px;color:#fff;font-weight:700;transform:scaleX(1.0500);">25</div><div class="t" style="left:1145.03px;top:1169.73px;font-size:19.14px;color:#fff;font-weight:700;transform:scaleX(1.0500);">27</div><div class="t" style="left:1268.33px;top:1169.73px;font-size:19.14px;color:#fff;font-weight:700;transform:scaleX(1.0500);">30</div><div class="t" style="left:769.31px;top:1216.14px;font-size:17.71px;color:#111111;">162</div><div class="t" style="left:891.31px;top:1216.14px;font-size:17.71px;color:#111111;">465</div><div class="t" style="left:1015.01px;top:1216.14px;font-size:17.71px;color:#111111;">821</div><div class="t" style="left:1122.24px;top:1216.14px;font-size:17.71px;color:#111111;">1,223</div><div class="t" style="left:1245.54px;top:1216.14px;font-size:17.71px;color:#111111;">1,703</div><div class="t" style="left:776.23px;top:1238.34px;font-size:17.71px;color:#111111;">(11)</div><div class="t" style="left:897.91px;top:1238.34px;font-size:17.71px;color:#111111;">(32)</div><div class="t" style="left:1020.61px;top:1238.34px;font-size:17.71px;color:#111111;">(53)</div><div class="t" style="left:1143.61px;top:1238.34px;font-size:17.71px;color:#111111;">(76)</div><div class="t" style="left:1257.07px;top:1238.34px;font-size:17.71px;color:#111111;">(102)</div><div class="t" style="left:765.16px;top:1261.23px;font-size:19.14px;color:#fff;font-weight:700;transform:scaleX(1.0500);">150</div><div class="t" style="left:888.16px;top:1261.23px;font-size:19.14px;color:#fff;font-weight:700;transform:scaleX(1.0500);">433</div><div class="t" style="left:1009.81px;top:1261.23px;font-size:19.14px;color:#fff;font-weight:700;transform:scaleX(1.0500);">768</div><div class="t" style="left:1116.07px;top:1261.23px;font-size:19.14px;color:#fff;font-weight:700;transform:scaleX(1.0500);">1,148</div><div class="t" style="left:1239.37px;top:1261.23px;font-size:19.14px;color:#fff;font-weight:700;transform:scaleX(1.0500);">1,601</div><div class="t" style="left:743.68px;top:1291.86px;font-size:17.57px;color:#111111;font-weight:700;font-style:italic;transform:scaleX(1.2000);">93.0%</div><div class="t" style="left:866.68px;top:1291.86px;font-size:17.57px;color:#111111;font-weight:700;font-style:italic;transform:scaleX(1.2000);">93.2%</div><div class="t" style="left:989.38px;top:1291.86px;font-size:17.57px;color:#111111;font-weight:700;font-style:italic;transform:scaleX(1.2000);">93.5%</div><div class="t" style="left:1112.38px;top:1291.86px;font-size:17.57px;color:#111111;font-weight:700;font-style:italic;transform:scaleX(1.2000);">93.8%</div><div class="t" style="left:1235.68px;top:1291.86px;font-size:17.57px;color:#111111;font-weight:700;font-style:italic;transform:scaleX(1.2000);">94.0%</div><div class="t" style="left:774.91px;top:1315.74px;font-size:17.71px;color:#111111;">(14)</div><div class="t" style="left:897.91px;top:1315.74px;font-size:17.71px;color:#111111;">(37)</div><div class="t" style="left:1020.61px;top:1315.74px;font-size:17.71px;color:#111111;">(62)</div><div class="t" style="left:1143.61px;top:1315.74px;font-size:17.71px;color:#111111;">(86)</div><div class="t" style="left:1259.70px;top:1315.74px;font-size:17.71px;color:#111111;">(111)</div><div class="t" style="left:765.16px;top:1340.23px;font-size:19.14px;color:#fff;font-weight:700;transform:scaleX(1.0500);">137</div><div class="t" style="left:888.16px;top:1340.23px;font-size:19.14px;color:#fff;font-weight:700;transform:scaleX(1.0500);">396</div><div class="t" style="left:1010.86px;top:1340.23px;font-size:19.14px;color:#fff;font-weight:700;transform:scaleX(1.0500);">706</div><div class="t" style="left:1117.12px;top:1340.23px;font-size:19.14px;color:#fff;font-weight:700;transform:scaleX(1.0500);">1,062</div><div class="t" style="left:1240.42px;top:1340.23px;font-size:19.14px;color:#fff;font-weight:700;transform:scaleX(1.0500);">1,490</div><div class="t" style="left:743.68px;top:1369.36px;font-size:17.57px;color:#111111;font-weight:700;font-style:italic;transform:scaleX(1.2000);">84.5%</div><div class="t" style="left:866.68px;top:1369.36px;font-size:17.57px;color:#111111;font-weight:700;font-style:italic;transform:scaleX(1.2000);">85.2%</div><div class="t" style="left:989.38px;top:1369.36px;font-size:17.57px;color:#111111;font-weight:700;font-style:italic;transform:scaleX(1.2000);">86.0%</div><div class="t" style="left:1112.38px;top:1369.36px;font-size:17.57px;color:#111111;font-weight:700;font-style:italic;transform:scaleX(1.2000);">86.8%</div><div class="t" style="left:1235.68px;top:1369.36px;font-size:17.57px;color:#111111;font-weight:700;font-style:italic;transform:scaleX(1.2000);">87.5%</div><div class="t" style="left:774.91px;top:1393.24px;font-size:17.71px;color:#111111;">(92)</div><div class="t" style="left:888.07px;top:1393.24px;font-size:17.71px;color:#111111;">(143)</div><div class="t" style="left:1010.77px;top:1393.24px;font-size:17.71px;color:#111111;">(214)</div><div class="t" style="left:1133.77px;top:1393.24px;font-size:17.71px;color:#111111;">(233)</div><div class="t" style="left:1257.07px;top:1393.24px;font-size:17.71px;color:#111111;">(279)</div><div class="t" style="left:774.91px;top:1415.14px;font-size:17.71px;color:#111111;">(16)</div><div class="t" style="left:897.91px;top:1415.14px;font-size:17.71px;color:#111111;">(16)</div><div class="t" style="left:1020.61px;top:1415.14px;font-size:17.71px;color:#111111;">(16)</div><div class="t" style="left:1143.61px;top:1415.14px;font-size:17.71px;color:#111111;">(16)</div><div class="t" style="left:1266.91px;top:1415.14px;font-size:17.71px;color:#111111;">(16)</div><div class="t" style="left:776.33px;top:1438.73px;font-size:19.14px;color:#fff;font-weight:700;transform:scaleX(1.0500);">29</div><div class="t" style="left:887.11px;top:1438.73px;font-size:19.14px;color:#fff;font-weight:700;transform:scaleX(1.0500);">238</div><div class="t" style="left:1010.86px;top:1438.73px;font-size:19.14px;color:#fff;font-weight:700;transform:scaleX(1.0500);">476</div><div class="t" style="left:1133.86px;top:1438.73px;font-size:19.14px;color:#fff;font-weight:700;transform:scaleX(1.0500);">813</div><div class="t" style="left:1239.37px;top:1438.73px;font-size:19.14px;color:#fff;font-weight:700;transform:scaleX(1.0500);">1,195</div><div class="t" style="left:743.68px;top:1466.36px;font-size:17.57px;color:#111111;font-weight:700;font-style:italic;transform:scaleX(1.2000);">17.7%</div><div class="t" style="left:866.68px;top:1466.36px;font-size:17.57px;color:#111111;font-weight:700;font-style:italic;transform:scaleX(1.2000);">51.2%</div><div class="t" style="left:989.38px;top:1466.36px;font-size:17.57px;color:#111111;font-weight:700;font-style:italic;transform:scaleX(1.2000);">58.0%</div><div class="t" style="left:1112.38px;top:1466.36px;font-size:17.57px;color:#111111;font-weight:700;font-style:italic;transform:scaleX(1.2000);">66.4%</div><div class="t" style="left:1235.68px;top:1466.36px;font-size:17.57px;color:#111111;font-weight:700;font-style:italic;transform:scaleX(1.2000);">70.2%</div><div class="t" style="left:776.23px;top:1490.54px;font-size:17.71px;color:#111111;">(11)</div><div class="t" style="left:897.91px;top:1490.54px;font-size:17.71px;color:#111111;">(17)</div><div class="t" style="left:1020.61px;top:1490.54px;font-size:17.71px;color:#111111;">(17)</div><div class="t" style="left:1143.61px;top:1490.54px;font-size:17.71px;color:#111111;">(17)</div><div class="t" style="left:1266.91px;top:1490.54px;font-size:17.71px;color:#111111;">(17)</div><div class="t" style="left:774.91px;top:1512.34px;font-size:17.71px;color:#111111;">(18)</div><div class="t" style="left:897.91px;top:1512.34px;font-size:17.71px;color:#111111;">(17)</div><div class="t" style="left:1020.61px;top:1512.34px;font-size:17.71px;color:#111111;">(14)</div><div class="t" style="left:1144.93px;top:1512.34px;font-size:17.71px;color:#111111;">(11)</div><div class="t" style="left:1276.76px;top:1512.34px;font-size:17.71px;color:#111111;">(7)</div><div class="t" style="left:781.34px;top:1536.93px;font-size:19.14px;color:#fff;font-weight:700;transform:scaleX(1.0500);">(1)</div><div class="t" style="left:887.11px;top:1536.93px;font-size:19.14px;color:#fff;font-weight:700;transform:scaleX(1.0500);">204</div><div class="t" style="left:1009.81px;top:1536.93px;font-size:19.14px;color:#fff;font-weight:700;transform:scaleX(1.0500);">445</div><div class="t" style="left:1132.81px;top:1536.93px;font-size:19.14px;color:#fff;font-weight:700;transform:scaleX(1.0500);">785</div><div class="t" style="left:1239.37px;top:1536.93px;font-size:19.14px;color:#fff;font-weight:700;transform:scaleX(1.0500);">1,171</div><div class="t" style="left:755.40px;top:1566.06px;font-size:17.57px;color:#111111;font-weight:700;font-style:italic;transform:scaleX(1.2000);">0.0%</div><div class="t" style="left:866.68px;top:1566.06px;font-size:17.57px;color:#111111;font-weight:700;font-style:italic;transform:scaleX(1.2000);">43.8%</div><div class="t" style="left:989.38px;top:1566.06px;font-size:17.57px;color:#111111;font-weight:700;font-style:italic;transform:scaleX(1.2000);">54.2%</div><div class="t" style="left:1112.38px;top:1566.06px;font-size:17.57px;color:#111111;font-weight:700;font-style:italic;transform:scaleX(1.2000);">64.2%</div><div class="t" style="left:1235.68px;top:1566.06px;font-size:17.57px;color:#111111;font-weight:700;font-style:italic;transform:scaleX(1.2000);">68.7%</div><div class="t" style="left:792.00px;top:1590.04px;font-size:17.71px;color:#111111;">-</div><div class="t" style="left:897.91px;top:1590.04px;font-size:17.71px;color:#111111;">(51)</div><div class="t" style="left:1013.40px;top:1590.04px;font-size:17.71px;color:#111111;">(111)</div><div class="t" style="left:1133.77px;top:1590.04px;font-size:17.71px;color:#111111;">(196)</div><div class="t" style="left:1257.07px;top:1590.04px;font-size:17.71px;color:#111111;">(293)</div><div class="t" style="left:781.34px;top:1614.83px;font-size:19.14px;color:#fff;font-weight:700;transform:scaleX(1.0500);">(1)</div><div class="t" style="left:888.16px;top:1614.83px;font-size:19.14px;color:#fff;font-weight:700;transform:scaleX(1.0500);">153</div><div class="t" style="left:1009.81px;top:1614.83px;font-size:19.14px;color:#fff;font-weight:700;transform:scaleX(1.0500);">334</div><div class="t" style="left:1133.86px;top:1614.83px;font-size:19.14px;color:#fff;font-weight:700;transform:scaleX(1.0500);">589</div><div class="t" style="left:1256.11px;top:1614.83px;font-size:19.14px;color:#fff;font-weight:700;transform:scaleX(1.0500);">878</div><div class="t" style="left:755.40px;top:1643.96px;font-size:17.57px;color:#111111;font-weight:700;font-style:italic;transform:scaleX(1.2000);">0.0%</div><div class="t" style="left:866.68px;top:1643.96px;font-size:17.57px;color:#111111;font-weight:700;font-style:italic;transform:scaleX(1.2000);">32.8%</div><div class="t" style="left:989.38px;top:1643.96px;font-size:17.57px;color:#111111;font-weight:700;font-style:italic;transform:scaleX(1.2000);">40.6%</div><div class="t" style="left:1112.38px;top:1643.96px;font-size:17.57px;color:#111111;font-weight:700;font-style:italic;transform:scaleX(1.2000);">48.1%</div><div class="t" style="left:1235.68px;top:1643.96px;font-size:17.57px;color:#111111;font-weight:700;font-style:italic;transform:scaleX(1.2000);">51.6%</div><div class="t" style="left:149.05px;top:914.67px;font-size:17.29px;color:#111111;font-weight:700;transform:scaleX(1.1000);">162</div><div class="t" style="left:240.05px;top:914.47px;font-size:17.29px;color:#111111;font-weight:700;transform:scaleX(1.1000);">163</div><div class="t" style="left:183.76px;top:1024.30px;font-size:20.00px;color:#111111;font-weight:700;transform:scaleX(1.1200);">2026</div><div class="t" style="left:385.87px;top:851.77px;font-size:17.29px;color:#111111;font-weight:700;transform:scaleX(1.1000);">465</div><div class="t" style="left:477.42px;top:901.39px;font-size:17.29px;color:#111111;font-weight:700;transform:scaleX(1.1000);">226</div><div class="t" style="left:420.58px;top:1024.30px;font-size:20.00px;color:#111111;font-weight:700;transform:scaleX(1.1200);">2027</div><div class="t" style="left:622.69px;top:777.86px;font-size:17.29px;color:#111111;font-weight:700;transform:scaleX(1.1000);">821</div><div class="t" style="left:713.69px;top:885.19px;font-size:17.29px;color:#111111;font-weight:700;transform:scaleX(1.1000);">304</div><div class="t" style="left:657.40px;top:1024.30px;font-size:20.00px;color:#111111;font-weight:700;transform:scaleX(1.1200);">2028</div><div class="t" style="left:851.59px;top:694.40px;font-size:17.29px;color:#111111;font-weight:700;transform:scaleX(1.1000);">1,223</div><div class="t" style="left:951.06px;top:882.08px;font-size:17.29px;color:#111111;font-weight:700;transform:scaleX(1.1000);">319</div><div class="t" style="left:894.22px;top:1024.30px;font-size:20.00px;color:#111111;font-weight:700;transform:scaleX(1.1200);">2029</div><div class="t" style="left:1088.41px;top:594.75px;font-size:17.29px;color:#111111;font-weight:700;transform:scaleX(1.1000);">1,703</div><div class="t" style="left:1187.33px;top:872.53px;font-size:17.29px;color:#111111;font-weight:700;transform:scaleX(1.1000);">365</div><div class="t" style="left:1131.04px;top:1024.30px;font-size:20.00px;color:#111111;font-weight:700;transform:scaleX(1.1200);">2030</div><div class="t" style="left:331.19px;top:559.77px;font-size:22.86px;color:#111111;font-weight:700;transform:scaleX(1.0116);">Revenue</div><div class="t" style="left:664.98px;top:559.57px;font-size:22.86px;color:#111111;font-weight:700;transform:scaleX(1.0227);">Revenue Breakeven level (Annual)</div><div class="t" style="left:94.44px;top:38.24px;font-size:18.43px;color:#ffffff;transform:scaleX(0.9581);">knife-sharpening.xlsx</div><div class="t" style="left:270.70px;top:38.24px;font-size:18.43px;color:#ffffff;transform:scaleX(0.9500);">-</div><div class="t" style="left:286.87px;top:38.24px;font-size:18.43px;color:#ffffff;transform:scaleX(0.9251);">Read-Only</div><div class="t" style="left:41.59px;top:97.61px;font-size:19.29px;color:#ffffff;transform:scaleX(1.0093);">File</div><div class="t" style="left:110.67px;top:97.61px;font-size:19.29px;color:#ffffff;font-weight:700;transform:scaleX(1.0282);">Home</div><div class="t" style="left:197.52px;top:97.61px;font-size:19.29px;color:#ffffff;transform:scaleX(0.9847);">Insert</div><div class="t" style="left:276.70px;top:97.61px;font-size:19.29px;color:#ffffff;transform:scaleX(1.0036);">Draw</div><div class="t" style="left:352.53px;top:97.61px;font-size:19.29px;color:#ffffff;transform:scaleX(0.9709);">Page Layout</div><div class="t" style="left:490.28px;top:97.61px;font-size:19.29px;color:#ffffff;transform:scaleX(1.0158);">Formulas</div><div class="t" style="left:599.40px;top:97.61px;font-size:19.29px;color:#ffffff;transform:scaleX(1.0030);">Data</div><div class="t" style="left:670.24px;top:97.61px;font-size:19.29px;color:#ffffff;transform:scaleX(0.9573);">Review</div><div class="t" style="left:762.10px;top:97.61px;font-size:19.29px;color:#ffffff;transform:scaleX(0.9880);">View</div><div class="t" style="left:834.20px;top:97.61px;font-size:19.29px;color:#ffffff;transform:scaleX(1.0618);">Automate</div><div class="t" style="left:949.94px;top:97.61px;font-size:19.29px;color:#ffffff;transform:scaleX(1.0578);">Help</div><div class="t" style="left:2652.60px;top:96.79px;font-size:18.71px;color:#ffffff;transform:scaleX(1.0370);">Comments</div><div class="t" style="left:2799.80px;top:96.79px;font-size:18.71px;color:#0a0a0a;transform:scaleX(0.9574);">Share</div><div class="t" style="left:50.77px;top:194.36px;font-size:17.57px;color:#7c7c7c;transform:scaleX(0.9272);">Paste</div><div class="t" style="left:142.00px;top:144.43px;font-size:17.14px;color:#f2f2f2;transform:scaleX(0.9966);">Cut</div><div class="t" style="left:142.00px;top:182.53px;font-size:17.14px;color:#f2f2f2;transform:scaleX(1.0293);">Copy</div><div class="t" style="left:140.98px;top:222.53px;font-size:17.14px;color:#f2f2f2;transform:scaleX(1.0244);">Format Painter</div><div class="t" style="left:297.90px;top:155.76px;font-size:17.57px;color:#f2f2f2;transform:scaleX(1.0189);">Tahoma</div><div class="t" style="left:482.80px;top:155.76px;font-size:17.57px;color:#f2f2f2;transform:scaleX(0.9444);">8</div><div class="t" style="left:897.00px;top:155.86px;font-size:17.57px;color:#f2f2f2;transform:scaleX(0.9917);">Wrap Text</div><div class="t" style="left:895.98px;top:203.86px;font-size:17.57px;color:#f2f2f2;transform:scaleX(1.0226);">Merge &amp; Center</div><div class="t" style="left:1099.50px;top:155.86px;font-size:17.57px;color:#f2f2f2;transform:scaleX(0.9419);">General</div><div class="t" style="left:1345.97px;top:195.16px;font-size:17.57px;color:#f2f2f2;transform:scaleX(1.0292);">Insert</div><div class="t" style="left:1407.98px;top:195.16px;font-size:17.57px;color:#f2f2f2;transform:scaleX(1.0204);">Delete</div><div class="t" style="left:1471.57px;top:193.26px;font-size:17.57px;color:#f2f2f2;transform:scaleX(1.0303);">Format</div><div class="t" style="left:1593.70px;top:144.06px;font-size:17.57px;color:#f2f2f2;transform:scaleX(1.0194);">AutoSum</div><div class="t" style="left:1592.74px;top:182.36px;font-size:17.57px;color:#f2f2f2;transform:scaleX(0.9595);">Fill</div><div class="t" style="left:1593.70px;top:221.86px;font-size:17.57px;color:#f2f2f2;transform:scaleX(0.9093);">Clear</div><div class="t" style="left:1725.20px;top:192.86px;font-size:17.57px;color:#f2f2f2;transform:scaleX(1.0491);">Sort &amp;</div><div class="t" style="left:1722.99px;top:216.36px;font-size:17.57px;color:#f2f2f2;transform:scaleX(1.0058);">Filter</div><div class="t" style="left:1794.25px;top:192.86px;font-size:17.57px;color:#f2f2f2;transform:scaleX(1.0531);">Find &amp;</div><div class="t" style="left:1789.80px;top:216.36px;font-size:17.57px;color:#f2f2f2;transform:scaleX(0.9421);">Select</div><div class="t" style="left:1885.20px;top:192.86px;font-size:17.57px;color:#f2f2f2;transform:scaleX(1.0374);">Add-ins</div><div class="t" style="left:1980.00px;top:192.86px;font-size:17.57px;color:#f2f2f2;transform:scaleX(0.9852);">Analyze</div><div class="t" style="left:1991.50px;top:216.36px;font-size:17.57px;color:#f2f2f2;transform:scaleX(0.9964);">Data</div><div class="t" style="left:109.60px;top:254.34px;font-size:15.71px;color:#e6e6e6;transform:scaleX(1.0063);">Clipboard</div><div class="t" style="left:429.00px;top:254.84px;font-size:15.71px;color:#e6e6e6;">Font</div><div class="t" style="left:810.20px;top:254.64px;font-size:15.71px;color:#e6e6e6;transform:scaleX(1.0161);">Alignment</div><div class="t" style="left:1162.36px;top:254.84px;font-size:15.71px;color:#e6e6e6;transform:scaleX(1.0417);">Number</div><div class="t" style="left:1418.00px;top:254.84px;font-size:15.71px;color:#e6e6e6;transform:scaleX(0.9187);">Cells</div><div class="t" style="left:1681.48px;top:255.14px;font-size:15.71px;color:#e6e6e6;transform:scaleX(1.0177);">Editing</div><div class="t" style="left:1888.50px;top:255.14px;font-size:15.71px;color:#e6e6e6;transform:scaleX(0.9833);">Add-ins</div><div class="t" style="left:2293.23px;top:155.80px;font-size:48.00px;color:#ffffff;font-weight:700;transform:scaleX(0.8560);-webkit-text-stroke:1.6px #fff;">F</div><div class="t" style="left:2318.53px;top:155.80px;font-size:48.00px;color:#ffffff;font-weight:700;transform:scaleX(1.0250);-webkit-text-stroke:1.6px #fff;">I</div><div class="t" style="left:2332.37px;top:155.80px;font-size:48.00px;color:#ffffff;font-weight:700;transform:scaleX(1.0103);-webkit-text-stroke:1.6px #fff;">N</div><div class="t" style="left:2366.78px;top:155.80px;font-size:48.00px;color:#ffffff;font-weight:700;transform:scaleX(1.1412);-webkit-text-stroke:1.6px #fff;">M</div><div class="t" style="left:2451.97px;top:155.80px;font-size:48.00px;color:#ffffff;font-weight:700;transform:scaleX(0.9767);-webkit-text-stroke:1.6px #fff;">D</div><div class="t" style="left:2486.95px;top:155.80px;font-size:48.00px;color:#ffffff;font-weight:700;transform:scaleX(0.6500);-webkit-text-stroke:1.6px #fff;">E</div><div class="t" style="left:2509.72px;top:155.80px;font-size:48.00px;color:#ffffff;font-weight:700;transform:scaleX(0.7280);-webkit-text-stroke:1.6px #fff;">L</div><div class="t" style="left:2533.98px;top:155.80px;font-size:48.00px;color:#ffffff;font-weight:700;transform:scaleX(0.8200);-webkit-text-stroke:1.6px #fff;">S</div><div class="t" style="left:2562.01px;top:155.80px;font-size:48.00px;color:#ffffff;font-weight:700;transform:scaleX(0.6960);-webkit-text-stroke:1.6px #fff;">L</div><div class="t" style="left:2584.52px;top:155.80px;font-size:48.00px;color:#ffffff;font-weight:700;transform:scaleX(0.9818);-webkit-text-stroke:1.6px #fff;">A</div><div class="t" style="left:2619.93px;top:155.80px;font-size:48.00px;color:#ffffff;font-weight:700;transform:scaleX(0.9233);-webkit-text-stroke:1.6px #fff;">B</div><div class="t" style="left:2295.60px;top:207.16px;font-size:35.57px;color:#ffffff;">T</div><div class="t" style="left:2337.60px;top:207.16px;font-size:35.57px;color:#ffffff;">e</div><div class="t" style="left:2382.10px;top:207.16px;font-size:35.57px;color:#ffffff;">m</div><div class="t" style="left:2435.70px;top:207.16px;font-size:35.57px;color:#ffffff;">p</div><div class="t" style="left:2481.30px;top:207.16px;font-size:35.57px;color:#ffffff;">l</div><div class="t" style="left:2510.40px;top:207.16px;font-size:35.57px;color:#ffffff;">a</div><div class="t" style="left:2554.40px;top:207.16px;font-size:35.57px;color:#ffffff;">t</div><div class="t" style="left:2589.70px;top:207.16px;font-size:35.57px;color:#ffffff;">e</div><div class="t" style="left:2634.00px;top:207.16px;font-size:35.57px;color:#ffffff;">s</div><div class="t" style="left:312.31px;top:1685.23px;font-size:21.14px;color:#141414;transform:scaleX(0.9912);">Dashboard</div><div class="t" style="left:453.56px;top:1685.23px;font-size:21.14px;color:#141414;transform:scaleX(0.9419);">Revenue</div><div class="t" style="left:571.09px;top:1685.23px;font-size:21.14px;color:#141414;transform:scaleX(0.9097);">COGS &amp; OPEX</div><div class="t" style="left:742.83px;top:1685.23px;font-size:21.14px;color:#141414;transform:scaleX(0.9654);">Payroll</div><div class="t" style="left:844.64px;top:1685.23px;font-size:21.14px;color:#141414;transform:scaleX(0.8607);">CAPEX</div><div class="t" style="left:944.83px;top:1685.23px;font-size:21.14px;color:#141414;transform:scaleX(0.9679);">CapTable</div><div class="t" style="left:1070.82px;top:1685.23px;font-size:21.14px;color:#141414;transform:scaleX(0.9771);">Capital</div><div class="t" style="left:1174.19px;top:1685.23px;font-size:21.14px;color:#141414;transform:scaleX(0.8108);">IS</div><div class="t" style="left:1228.36px;top:1685.23px;font-size:21.14px;color:#141414;transform:scaleX(0.8365);">CF</div><div class="t" style="left:1290.10px;top:1685.23px;font-size:21.14px;color:#141414;transform:scaleX(0.8047);">BS</div><div class="t" style="left:1352.00px;top:1685.23px;font-size:21.14px;color:#141414;transform:scaleX(0.9274);">Scenarios</div><div class="t" style="left:1479.90px;top:1685.23px;font-size:21.14px;color:#141414;transform:scaleX(1.0062);">Valuation</div><div class="t" style="left:1608.40px;top:1685.23px;font-size:21.14px;color:#141414;transform:scaleX(0.9547);">Summary</div><div class="t" style="left:1794.92px;top:1685.23px;font-size:21.14px;color:#141414;transform:scaleX(0.8806);">ROIC</div><div class="t" style="left:1879.25px;top:1685.23px;font-size:21.14px;color:#141414;transform:scaleX(0.9529);">Charts</div><div class="t" style="left:1977.73px;top:1685.23px;font-size:21.14px;color:#141414;transform:scaleX(0.8664);">KPIs</div><div class="t" style="left:189.00px;top:1685.33px;font-size:21.14px;color:#f0f0f0;transform:scaleX(0.9965);">Contents</div><div class="t" style="left:1733.03px;top:1679.99px;font-size:21.43px;color:#141414;font-weight:700;transform:scaleX(0.7730);">BE</div><div class="t" style="left:26.47px;top:1727.30px;font-size:18.00px;color:#e8e8e8;transform:scaleX(0.8328);">Ready</div><div class="t" style="left:173.70px;top:1727.06px;font-size:18.29px;color:#f0f0f0;font-weight:700;transform:scaleX(0.8560);">Accessibility: Investigate</div><div class="t" style="left:2839.52px;top:1727.26px;font-size:16.29px;color:#e8e8e8;transform:scaleX(0.9787);">110%</div>

</body></html>
